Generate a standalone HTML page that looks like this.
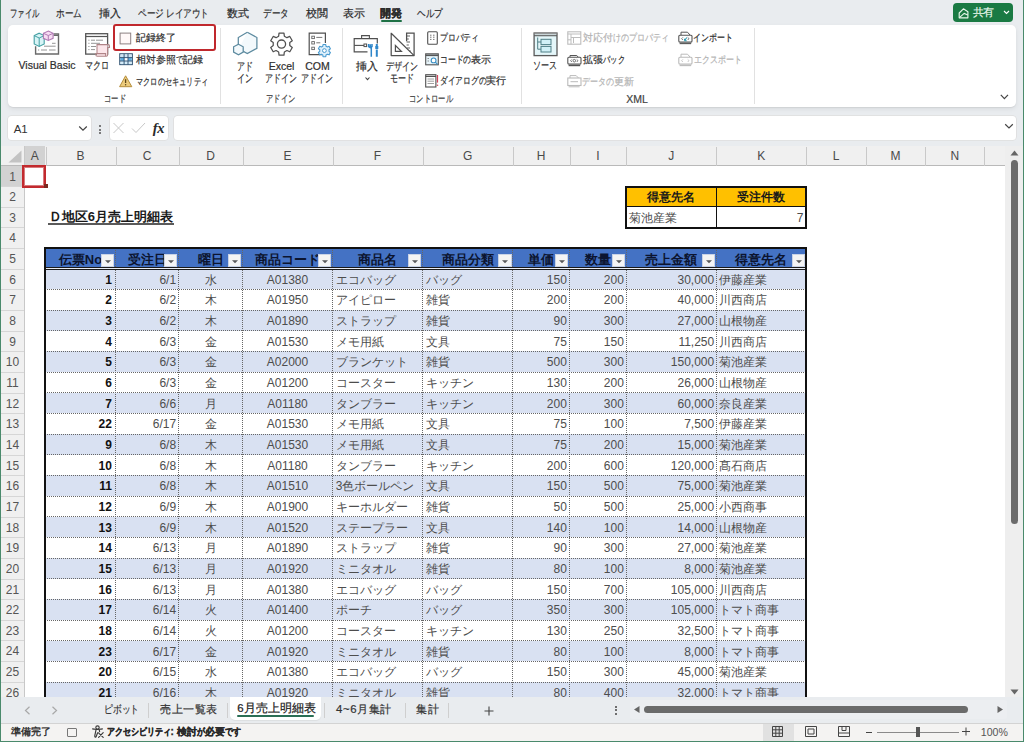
<!DOCTYPE html><html lang="ja"><head><meta charset="utf-8"><style>
html,body{margin:0;padding:0;}body{width:1024px;height:742px;position:relative;overflow:hidden;background:#e9ecef;font-family:"Liberation Sans",sans-serif;}div{box-sizing:border-box;}
</style></head><body>
<div style="position:absolute;left:10px;top:8px;font-size:11px;line-height:11px;color:#2b2b2b;font-weight:normal;white-space:nowrap;-webkit-text-stroke:0.2px #2b2b2b;"><span style="display:inline-block;transform:scaleX(0.670);transform-origin:0 0;margin-right:-1.320em">ファイル</span></div>
<div style="position:absolute;left:56.3px;top:8px;font-size:11px;line-height:11px;color:#2b2b2b;font-weight:normal;white-space:nowrap;-webkit-text-stroke:0.2px #2b2b2b;"><span style="display:inline-block;transform:scaleX(0.780);transform-origin:0 0;margin-right:-0.660em">ホーム</span></div>
<div style="position:absolute;left:99.2px;top:8px;font-size:11px;line-height:11px;color:#2b2b2b;font-weight:normal;white-space:nowrap;-webkit-text-stroke:0.2px #2b2b2b;">挿入</div>
<div style="position:absolute;left:137.5px;top:8px;font-size:11px;line-height:11px;color:#2b2b2b;font-weight:normal;white-space:nowrap;-webkit-text-stroke:0.2px #2b2b2b;"><span style="display:inline-block;transform:scaleX(0.780);transform-origin:0 0;margin-right:-0.660em">ページ</span> <span style="display:inline-block;transform:scaleX(0.780);transform-origin:0 0;margin-right:-1.100em">レイアウト</span></div>
<div style="position:absolute;left:226.9px;top:8px;font-size:11px;line-height:11px;color:#2b2b2b;font-weight:normal;white-space:nowrap;-webkit-text-stroke:0.2px #2b2b2b;">数式</div>
<div style="position:absolute;left:262.8px;top:8px;font-size:11px;line-height:11px;color:#2b2b2b;font-weight:normal;white-space:nowrap;-webkit-text-stroke:0.2px #2b2b2b;"><span style="display:inline-block;transform:scaleX(0.780);transform-origin:0 0;margin-right:-0.660em">データ</span></div>
<div style="position:absolute;left:305.6px;top:8px;font-size:11px;line-height:11px;color:#2b2b2b;font-weight:normal;white-space:nowrap;-webkit-text-stroke:0.2px #2b2b2b;">校閲</div>
<div style="position:absolute;left:342.5px;top:8px;font-size:11px;line-height:11px;color:#2b2b2b;font-weight:normal;white-space:nowrap;-webkit-text-stroke:0.2px #2b2b2b;">表示</div>
<div style="position:absolute;left:380px;top:8px;font-size:11px;line-height:11px;color:#2b2b2b;font-weight:bold;white-space:nowrap;-webkit-text-stroke:0.2px #2b2b2b;">開発</div>
<div style="position:absolute;left:416.6px;top:8px;font-size:11px;line-height:11px;color:#2b2b2b;font-weight:normal;white-space:nowrap;-webkit-text-stroke:0.2px #2b2b2b;"><span style="display:inline-block;transform:scaleX(0.780);transform-origin:0 0;margin-right:-0.660em">ヘルプ</span></div>
<div style="position:absolute;left:380.5px;top:20.3px;width:21.5px;height:1.6px;background:#1e7145;border-radius:1px"></div>
<div style="position:absolute;left:953px;top:3px;width:60px;height:19px;background:#1a7a43;border-radius:4px"></div>
<div style="position:absolute;left:972.6px;top:7.2px;font-size:11px;line-height:11px;color:#e9f8ec;font-weight:normal;white-space:nowrap;letter-spacing:-0.3px;-webkit-text-stroke:0.15px #e9f8ec;">共有</div>
<svg style="position:absolute;left:958px;top:6.5px" width="11" height="12" viewBox="0 0 11 12"><path d="M1.2 6L5.4 1.8L9.9 4.8V10.8H1.2Z" fill="none" stroke="#e6f7ea" stroke-width="1.15" stroke-linejoin="round"/><path d="M1.4 10.6L6.2 6.4L9.8 8" fill="none" stroke="#e6f7ea" stroke-width="1.1"/></svg>
<svg style="position:absolute;left:1003px;top:10px" width="7" height="5" viewBox="0 0 7 5"><path d="M1 1l2.5 2.5L6 1" fill="none" stroke="#fff" stroke-width="1.1"/></svg>
<div style="position:absolute;left:8px;top:25px;width:1008px;height:82.4px;background:#fff;border-radius:5px;box-shadow:0 1px 1px rgba(0,0,0,0.06),0 2px 5px rgba(0,0,0,0.07)"></div>
<div style="position:absolute;left:220.3px;top:28px;width:1px;height:76px;background:#e1e1e1"></div>
<div style="position:absolute;left:341.7px;top:28px;width:1px;height:76px;background:#e1e1e1"></div>
<div style="position:absolute;left:520.5px;top:28px;width:1px;height:76px;background:#e1e1e1"></div>
<div style="position:absolute;left:753.5px;top:28px;width:1px;height:76px;background:#e1e1e1"></div>
<svg style="position:absolute;left:33px;top:30px;overflow:visible" width="27" height="26" viewBox="0 0 27 26">
<path d="M20.5 3.9H25.5V24H2.6V16.3" fill="none" stroke="#6a6a6a" stroke-width="1.4"/>
<path d="M20.5 5.2H25.5" stroke="#6a6a6a" stroke-width="1.6"/>
<path d="M19 13.3h3.6M11 16.2h11.6M5 20h1.2M8 20h6M16 20h6.6" stroke="#8a8a8a" stroke-width="0.9"/>
<path d="M6.2 3.2L11.2 5.6V14L6.2 16.4L1.2 14V5.6Z" fill="#d8f4f6" stroke="#45a0a4" stroke-width="1.1"/>
<path d="M1.2 5.6L6.2 8L11.2 5.6M6.2 8V16.4" fill="none" stroke="#45a0a4" stroke-width="1"/>
<path d="M15.3 1.1L20.1 3.3V8.3L15.3 10.4L10.4 8.3V3.3Z" fill="#f7dcf3" stroke="#b07ab4" stroke-width="1.1"/>
<path d="M10.4 3.3L15.3 5.5L20.1 3.3M15.3 5.5V10.4" fill="none" stroke="#b07ab4" stroke-width="1"/>
</svg>
<div style="position:absolute;left:-13px;top:58.5px;width:120px;text-align:center;font-size:10.5px;line-height:12.5px;color:#2e2e2e;font-weight:normal;white-space:nowrap;-webkit-text-stroke:0.2px #2e2e2e">Visual Basic</div>
<svg style="position:absolute;left:85px;top:33px;overflow:visible" width="25" height="24" viewBox="0 0 25 24">
<rect x="0.7" y="0.7" width="21.9" height="20.4" fill="#fff" stroke="#555" stroke-width="1.3"/>
<path d="M0.7 3.5H22.6" stroke="#555" stroke-width="1.2"/>
<path d="M3.3 7.2h1.2M6 7.2h4M11 7.2h7M3.3 10.3h1.2M6 10.3h9M3.3 13.5h1.2M6 13.5h5M3.3 16.6h1.2M6 16.6h4" stroke="#8a8a8a" stroke-width="0.9"/>
<path d="M12 11.6H22.6V23H12Z" fill="#fce6ea"/>
<path d="M12 20.6V11.6H23.3Q24.5 11.6 24.5 12.9V14.5H22.6V22Q22.6 23.2 21.4 23.2H12.3Q10.9 23.2 10.9 21.9V20.6H20.6V23" fill="none" stroke="#b08487" stroke-width="1.05"/>
</svg>
<div style="position:absolute;left:37px;top:58.5px;width:120px;text-align:center;font-size:10.5px;line-height:12.5px;color:#2e2e2e;font-weight:normal;white-space:nowrap;-webkit-text-stroke:0.2px #2e2e2e"><span style="display:inline-block;transform:scaleX(0.730);transform-origin:0 0;margin-right:-0.810em">マクロ</span></div>
<div style="position:absolute;left:113.3px;top:24px;width:102.3px;height:26.5px;border:2.2px solid #c0282d;border-radius:3px"></div>
<svg style="position:absolute;left:119px;top:31.5px;overflow:visible" width="13" height="13" viewBox="0 0 13 13"><rect x="1.1" y="1.1" width="10.6" height="10.8" fill="#fff8f8" stroke="#8c8082" stroke-width="1"/></svg>
<div style="position:absolute;left:136px;top:32.5px;font-size:10px;line-height:10px;color:#2e2e2e;font-weight:normal;white-space:nowrap;-webkit-text-stroke:0.2px #2e2e2e;">記録終了</div>
<svg style="position:absolute;left:118.5px;top:53px;overflow:visible" width="14" height="12.5" viewBox="0 0 14 12.5">
<rect x="0.8" y="0.8" width="12.5" height="10.8" fill="#fff" stroke="#2a4d6e" stroke-width="1.1"/>
<rect x="1.4" y="1.4" width="11.3" height="3" fill="#cfe7f6"/>
<rect x="1.4" y="4.8" width="3.7" height="3" fill="#5faee3"/><rect x="9.1" y="4.8" width="3.6" height="3" fill="#5faee3"/>
<rect x="1.4" y="8.2" width="11.3" height="3" fill="#d5ecf8"/>
<path d="M5.1 0.8V11.6M9 0.8V11.6M0.8 4.6H13.3M0.8 8H13.3" stroke="#2a4d6e" stroke-width="0.9"/>
</svg>
<div style="position:absolute;left:136px;top:54.5px;font-size:10px;line-height:10px;color:#2e2e2e;font-weight:normal;white-space:nowrap;-webkit-text-stroke:0.2px #2e2e2e;">相対参照<span style="display:inline-block;transform:scaleX(0.730);transform-origin:0 0;margin-right:-0.270em">で</span>記録</div>
<svg style="position:absolute;left:118.5px;top:74.5px;overflow:visible" width="13.5" height="12.5" viewBox="0 0 13.5 12.5">
<path d="M6.6 0.8L12.8 11.7H0.6Z" fill="#eccb7c" stroke="#b48d3c" stroke-width="1" stroke-linejoin="round"/>
<path d="M6.6 4.2V8" stroke="#5c4518" stroke-width="1.3"/><circle cx="6.6" cy="9.7" r="0.75" fill="#5c4518"/>
</svg>
<div style="position:absolute;left:136px;top:76.5px;font-size:10px;line-height:10px;color:#2e2e2e;font-weight:normal;white-space:nowrap;-webkit-text-stroke:0.2px #2e2e2e;"><span style="display:inline-block;transform:scaleX(0.720);transform-origin:0 0;margin-right:-2.800em">マクロのセキュリティ</span></div>
<div style="position:absolute;left:55px;top:92.5px;width:120px;text-align:center;font-size:10px;line-height:12px;color:#444;font-weight:normal;white-space:nowrap;-webkit-text-stroke:0.2px #444"><span style="display:inline-block;transform:scaleX(0.730);transform-origin:0 0;margin-right:-0.810em">コード</span></div>
<svg style="position:absolute;left:232px;top:31px;overflow:visible" width="27" height="25" viewBox="0 0 27 25">
<path d="M15.3 1.2L24.9 6.5V17.3L15.3 22.6L6.8 17.9" fill="#f3f9fc" stroke="#5c8a9f" stroke-width="1.25"/>
<path d="M6.3 13V6.5L15.3 1.2" fill="none" stroke="#5c8a9f" stroke-width="1.25"/>
<path d="M6.5 13.2L11.2 15.8V21.1L6.5 23.7L1.6 21.1V15.8Z" fill="#f3f9fc" stroke="#5c8a9f" stroke-width="1.25"/>
</svg>
<div style="position:absolute;left:184.8px;top:60px;width:120px;text-align:center;font-size:10.5px;line-height:12.5px;color:#2e2e2e;font-weight:normal;white-space:nowrap;-webkit-text-stroke:0.2px #2e2e2e"><span style="display:inline-block;transform:scaleX(0.730);transform-origin:0 0;margin-right:-0.540em">アド</span></div>
<div style="position:absolute;left:184.8px;top:71.5px;width:120px;text-align:center;font-size:10.5px;line-height:12.5px;color:#2e2e2e;font-weight:normal;white-space:nowrap;-webkit-text-stroke:0.2px #2e2e2e"><span style="display:inline-block;transform:scaleX(0.730);transform-origin:0 0;margin-right:-0.540em">イン</span></div>
<svg style="position:absolute;left:269px;top:31.5px;overflow:visible" width="25" height="24" viewBox="0 0 25 24">
<path d="M9.65 4.20 L10.03 1.07 L14.97 1.07 L15.35 4.20 L17.92 5.68 L20.82 4.45 L23.28 8.72 L20.77 10.61 L20.77 13.59 L23.28 15.48 L20.82 19.75 L17.92 18.52 L15.35 20.00 L14.97 23.13 L10.03 23.13 L9.65 20.00 L7.08 18.52 L4.18 19.75 L1.72 15.48 L4.23 13.59 L4.23 10.61 L1.72 8.72 L4.18 4.45 L7.08 5.68Z" fill="#fff" stroke="#505050" stroke-width="1.25" stroke-linejoin="round"/>
<circle cx="12.5" cy="12.1" r="4.1" fill="none" stroke="#505050" stroke-width="1.3"/>
</svg>
<div style="position:absolute;left:221.5px;top:60px;width:120px;text-align:center;font-size:10.5px;line-height:12.5px;color:#2e2e2e;font-weight:normal;white-space:nowrap;-webkit-text-stroke:0.2px #2e2e2e">Excel</div>
<div style="position:absolute;left:221.5px;top:71.5px;width:120px;text-align:center;font-size:10.5px;line-height:12.5px;color:#2e2e2e;font-weight:normal;white-space:nowrap;-webkit-text-stroke:0.2px #2e2e2e"><span style="display:inline-block;transform:scaleX(0.730);transform-origin:0 0;margin-right:-1.080em">アドイン</span></div>
<svg style="position:absolute;left:308px;top:31.5px;overflow:visible" width="24" height="26" viewBox="0 0 24 26">
<path d="M14 22.6H1.2V1.2H17.4V11" fill="#fff" stroke="#505050" stroke-width="1.2"/>
<rect x="3.8" y="4.2" width="2.6" height="2.4" fill="none" stroke="#666" stroke-width="0.9"/><path d="M8.3 5.4h6" stroke="#666" stroke-width="0.9"/>
<rect x="3.8" y="9.6" width="2.6" height="2.4" fill="none" stroke="#666" stroke-width="0.9"/><path d="M8.3 10.8h4" stroke="#666" stroke-width="0.9"/>
<rect x="3.8" y="15.2" width="2.6" height="2.4" fill="none" stroke="#666" stroke-width="0.9"/>
<path d="M14.81 14.18 L15.03 12.45 L17.77 12.45 L17.99 14.18 L19.43 15.01 L21.04 14.34 L22.41 16.72 L21.03 17.77 L21.03 19.43 L22.41 20.48 L21.04 22.86 L19.43 22.19 L17.99 23.02 L17.77 24.75 L15.03 24.75 L14.81 23.02 L13.37 22.19 L11.76 22.86 L10.39 20.48 L11.77 19.43 L11.77 17.77 L10.39 16.72 L11.76 14.34 L13.37 15.01Z" fill="#dff0fb" stroke="#4a9bd0" stroke-width="1.1" stroke-linejoin="round"/>
<circle cx="16.4" cy="18.6" r="1.9" fill="#fff" stroke="#4a9bd0" stroke-width="1"/>
</svg>
<div style="position:absolute;left:257.5px;top:60px;width:120px;text-align:center;font-size:10.5px;line-height:12.5px;color:#2e2e2e;font-weight:normal;white-space:nowrap;-webkit-text-stroke:0.2px #2e2e2e">COM</div>
<div style="position:absolute;left:257.5px;top:71.5px;width:120px;text-align:center;font-size:10.5px;line-height:12.5px;color:#2e2e2e;font-weight:normal;white-space:nowrap;-webkit-text-stroke:0.2px #2e2e2e"><span style="display:inline-block;transform:scaleX(0.730);transform-origin:0 0;margin-right:-1.080em">アドイン</span></div>
<div style="position:absolute;left:221px;top:93px;width:120px;text-align:center;font-size:10px;line-height:12px;color:#444;font-weight:normal;white-space:nowrap;-webkit-text-stroke:0.2px #444"><span style="display:inline-block;transform:scaleX(0.730);transform-origin:0 0;margin-right:-1.080em">アドイン</span></div>
<svg style="position:absolute;left:353px;top:33.5px;overflow:visible" width="27" height="24" viewBox="0 0 27 24">
<path d="M8.6 4.6V1.6H16.4V4.6" fill="none" stroke="#505050" stroke-width="1.1"/>
<path d="M14.5 17.9H1.2V4.6H24.3V9.5" fill="#fff" stroke="#505050" stroke-width="1.2"/>
<path d="M1.2 11.4H11" stroke="#505050" stroke-width="1.1"/><rect x="11" y="10" width="2.6" height="2.6" fill="#fff" stroke="#505050" stroke-width="1"/>
<path d="M17.3 10.2v2.3l1 1.1v9.2M15.6 9.9v2.6l1.7 1.2 1.7-1.2V9.9" fill="none" stroke="#2f86c9" stroke-width="1.5"/>
<path d="M23.8 9.9v4.3M23.8 15.5v7.2" stroke="#2f86c9" stroke-width="2"/><path d="M23.8 12v3" stroke="#2f86c9" stroke-width="3"/>
</svg>
<div style="position:absolute;left:356.3px;top:60.5px;font-size:10.5px;line-height:10.5px;color:#2e2e2e;font-weight:normal;white-space:nowrap;-webkit-text-stroke:0.2px #2e2e2e;">挿入</div>
<svg style="position:absolute;left:365px;top:76.5px;overflow:visible" width="5" height="3.5" viewBox="0 0 5 3.5"><path d="M0.5 0.5L2.5 2.7L4.5 0.5" fill="none" stroke="#444" stroke-width="1.1"/></svg>
<svg style="position:absolute;left:389.5px;top:31.5px;overflow:visible" width="25" height="25" viewBox="0 0 25 25">
<path d="M1.2 1.3V23.6H24.1Z" fill="#fff" stroke="#505050" stroke-width="1.25" stroke-linejoin="round"/>
<path d="M5.4 13.5V19.4H11.4Z" fill="none" stroke="#505050" stroke-width="1.2"/>
<path d="M16.6 9.3V1H24.1V23.6" fill="none" stroke="#505050" stroke-width="1.25"/>
<path d="M16.6 4h3.4M16.6 7h2.2M16.6 10h3.4M16.6 13h2.2M17 16h3M19.3 19h1.5" stroke="#505050" stroke-width="0.9"/>
</svg>
<div style="position:absolute;left:342px;top:60px;width:120px;text-align:center;font-size:10.5px;line-height:12.5px;color:#2e2e2e;font-weight:normal;white-space:nowrap;-webkit-text-stroke:0.2px #2e2e2e"><span style="display:inline-block;transform:scaleX(0.730);transform-origin:0 0;margin-right:-1.080em">デザイン</span></div>
<div style="position:absolute;left:342px;top:71.5px;width:120px;text-align:center;font-size:10.5px;line-height:12.5px;color:#2e2e2e;font-weight:normal;white-space:nowrap;-webkit-text-stroke:0.2px #2e2e2e"><span style="display:inline-block;transform:scaleX(0.730);transform-origin:0 0;margin-right:-0.810em">モード</span></div>
<svg style="position:absolute;left:426.5px;top:31px;overflow:visible" width="11" height="14" viewBox="0 0 11 14">
<rect x="0.7" y="0.7" width="9.6" height="12.6" rx="1" fill="#fff" stroke="#505050" stroke-width="1.1"/>
<path d="M3 4.2h1.5M6 4.2h1.5M3 6.2h1.5M6 6.2h1.5M3 8.4h1.5M6 8.4h1.5" stroke="#777" stroke-width="1"/>
</svg>
<div style="position:absolute;left:439.8px;top:32.5px;font-size:10px;line-height:10px;color:#2e2e2e;font-weight:normal;white-space:nowrap;-webkit-text-stroke:0.2px #2e2e2e;"><span style="display:inline-block;transform:scaleX(0.780);transform-origin:0 0;margin-right:-1.100em">プロパティ</span></div>
<svg style="position:absolute;left:425px;top:52.5px;overflow:visible" width="14" height="13" viewBox="0 0 14 13">
<rect x="0.7" y="0.8" width="12.6" height="11" fill="#e7f4fa" stroke="#555" stroke-width="1.1"/>
<path d="M0.7 2.3H13.3" stroke="#555" stroke-width="1.6"/>
<path d="M2.5 5.5h1.5M2.5 8h1.5" stroke="#777" stroke-width="0.8"/>
<circle cx="8.6" cy="7.4" r="2.4" fill="#fff" stroke="#3b8fc3" stroke-width="1.1"/><path d="M10.3 9.1l2.3 2.3" stroke="#3b8fc3" stroke-width="1.2"/>
</svg>
<div style="position:absolute;left:439.8px;top:54.5px;font-size:10px;line-height:10px;color:#2e2e2e;font-weight:normal;white-space:nowrap;-webkit-text-stroke:0.2px #2e2e2e;"><span style="display:inline-block;transform:scaleX(0.780);transform-origin:0 0;margin-right:-0.880em">コードの</span>表示</div>
<svg style="position:absolute;left:425px;top:73.5px;overflow:visible" width="14" height="14" viewBox="0 0 14 14">
<rect x="0.7" y="0.7" width="10.2" height="12.3" fill="#fff" stroke="#505050" stroke-width="1.1"/>
<path d="M0.7 2.4H10.9" stroke="#505050" stroke-width="1.2"/>
<path d="M2.5 5h6.5M2.5 7.2h6.5M2.5 9.5h6.5" stroke="#888" stroke-width="0.8"/>
<path d="M12.5 1v7.6" stroke="#d6455a" stroke-width="1.2"/><circle cx="12.5" cy="11.3" r="0.8" fill="#d6455a"/>
</svg>
<div style="position:absolute;left:439.8px;top:76px;font-size:10px;line-height:10px;color:#2e2e2e;font-weight:normal;white-space:nowrap;-webkit-text-stroke:0.2px #2e2e2e;"><span style="display:inline-block;transform:scaleX(0.770);transform-origin:0 0;margin-right:-1.380em">ダイアログの</span>実行</div>
<div style="position:absolute;left:371px;top:93px;width:120px;text-align:center;font-size:10px;line-height:12px;color:#444;font-weight:normal;white-space:nowrap;-webkit-text-stroke:0.2px #444"><span style="display:inline-block;transform:scaleX(0.730);transform-origin:0 0;margin-right:-1.620em">コントロール</span></div>
<svg style="position:absolute;left:532.5px;top:31.5px;overflow:visible" width="25" height="25" viewBox="0 0 25 25">
<rect x="1.1" y="1" width="22.9" height="22.6" fill="#e4f6f9" stroke="#5a5a5a" stroke-width="1.3"/>
<path d="M1.1 3.7H24" stroke="#5a5a5a" stroke-width="1.1"/><path d="M1.1 1.9H24" stroke="#9a9a9a" stroke-width="0.9"/>
<rect x="8" y="7.3" width="10" height="5.3" fill="#d1f0f6" stroke="#4f7f86" stroke-width="1"/>
<rect x="8" y="14.4" width="10" height="5.6" fill="#d1f0f6" stroke="#4f7f86" stroke-width="1"/>
<path d="M4.7 5.5V17.2H8M4.7 10H8" fill="none" stroke="#4f7f86" stroke-width="1"/>
</svg>
<div style="position:absolute;left:485.29999999999995px;top:59px;width:120px;text-align:center;font-size:10.5px;line-height:12.5px;color:#2e2e2e;font-weight:normal;white-space:nowrap;-webkit-text-stroke:0.2px #2e2e2e"><span style="display:inline-block;transform:scaleX(0.730);transform-origin:0 0;margin-right:-0.810em">ソース</span></div>
<svg style="position:absolute;left:566.5px;top:31px;overflow:visible" width="15" height="14" viewBox="0 0 15 14">
<rect x="0.8" y="0.8" width="13" height="12.4" fill="#fff" stroke="#bdbdbd" stroke-width="1.1"/>
<path d="M0.8 3h13M4 3v10.2M4 6.5h9.8M6.5 6.5V12M0.8 8.8h3.2" stroke="#bdbdbd" stroke-width="1"/>
</svg>
<div style="position:absolute;left:582.5px;top:32.5px;font-size:10px;line-height:10px;color:#b4b4b4;font-weight:normal;white-space:nowrap;-webkit-text-stroke:0.2px #b4b4b4;">対応付<span style="display:inline-block;transform:scaleX(0.800);transform-origin:0 0;margin-right:-1.400em">けのプロパティ</span></div>
<svg style="position:absolute;left:566.5px;top:52.5px;overflow:visible" width="15" height="14" viewBox="0 0 15 14">
<path d="M3 4.3V2.5H9.8l1.5 1.8" fill="none" stroke="#555" stroke-width="1"/>
<rect x="0.8" y="4.3" width="13.2" height="6.8" rx="1" fill="#fff" stroke="#555" stroke-width="1.1"/>
<path d="M3.6 7.7l1.3-1.3M3.6 7.7l1.3 1.3M11 7.7l-1.3-1.3M11 7.7l-1.3 1.3" stroke="#555" stroke-width="0.8"/><circle cx="7.3" cy="7.7" r="1.3" fill="none" stroke="#555" stroke-width="0.8"/>
<path d="M1.6 12.6H13.2" stroke="#555" stroke-width="1.2"/>
</svg>
<div style="position:absolute;left:582.5px;top:54.5px;font-size:10px;line-height:10px;color:#2e2e2e;font-weight:normal;white-space:nowrap;-webkit-text-stroke:0.2px #2e2e2e;">拡張<span style="display:inline-block;transform:scaleX(0.730);transform-origin:0 0;margin-right:-0.810em">パック</span></div>
<svg style="position:absolute;left:566.5px;top:74px;overflow:visible" width="15" height="14" viewBox="0 0 15 14">
<path d="M3 4V1.6H9.2L11.5 4" fill="none" stroke="#bbb" stroke-width="1"/>
<rect x="0.8" y="4" width="13.2" height="7.5" fill="#fff" stroke="#bbb" stroke-width="1.1"/>
<path d="M3.5 7.7h7.5M1.6 12.8H12.6" stroke="#bbb" stroke-width="1"/>
</svg>
<div style="position:absolute;left:581.5px;top:76.5px;font-size:10px;line-height:10px;color:#b4b4b4;font-weight:normal;white-space:nowrap;-webkit-text-stroke:0.2px #b4b4b4;"><span style="display:inline-block;transform:scaleX(0.800);transform-origin:0 0;margin-right:-0.800em">データの</span>更新</div>
<svg style="position:absolute;left:678px;top:31px;overflow:visible" width="15" height="15" viewBox="0 0 15 15">
<path d="M3 4.3V1.2H9.5L12 4" fill="none" stroke="#555" stroke-width="1"/>
<rect x="0.8" y="4.3" width="13.2" height="6.8" rx="1" fill="#fff" stroke="#555" stroke-width="1.1"/>
<path d="M3.6 7.7l1.3-1.3M3.6 7.7l1.3 1.3M11 7.7l-1.3-1.3M11 7.7l-1.3 1.3" stroke="#555" stroke-width="0.8"/>
<path d="M8.8 6.5L6.5 9.8M6.5 9.8h2.2M6.5 9.8V7.8" stroke="#2f9bb0" stroke-width="1.1" fill="none"/>
<path d="M1.6 12.6H13.2" stroke="#555" stroke-width="1.1"/>
</svg>
<div style="position:absolute;left:692.7px;top:32.5px;font-size:10px;line-height:10px;color:#2e2e2e;font-weight:normal;white-space:nowrap;-webkit-text-stroke:0.2px #2e2e2e;"><span style="display:inline-block;transform:scaleX(0.800);transform-origin:0 0;margin-right:-1.000em">インポート</span></div>
<svg style="position:absolute;left:678px;top:52.5px;overflow:visible" width="15" height="14" viewBox="0 0 15 14">
<path d="M3 4.3V1.2H9.5L12 4" fill="none" stroke="#bbb" stroke-width="1"/>
<rect x="0.8" y="4.3" width="13.2" height="6.8" rx="1" fill="#fff" stroke="#bbb" stroke-width="1.1"/>
<path d="M3.6 7.7l1.3-1.3M3.6 7.7l1.3 1.3M11 7.7l-1.3-1.3M11 7.7l-1.3 1.3" stroke="#bbb" stroke-width="0.8"/>
<path d="M1.6 12.6H13.2" stroke="#bbb" stroke-width="1.1"/>
</svg>
<div style="position:absolute;left:693.7px;top:54.5px;font-size:10px;line-height:10px;color:#b4b4b4;font-weight:normal;white-space:nowrap;-webkit-text-stroke:0.2px #b4b4b4;"><span style="display:inline-block;transform:scaleX(0.800);transform-origin:0 0;margin-right:-1.200em">エクスポート</span></div>
<div style="position:absolute;left:577px;top:93px;width:120px;text-align:center;font-size:10.5px;line-height:12.5px;color:#444;font-weight:normal;white-space:nowrap;-webkit-text-stroke:0.2px #444">XML</div>
<svg style="position:absolute;left:1000.3px;top:94px;overflow:visible" width="9" height="6" viewBox="0 0 9 6"><path d="M0.8 0.8L4.4 4.6L8 0.8" fill="none" stroke="#444" stroke-width="1.2"/></svg>
<div style="position:absolute;left:8px;top:116px;width:83px;height:23.5px;background:#fff;border-radius:3.5px;box-shadow:0 0 0 0.8px #dedede"></div>
<div style="position:absolute;left:13.7px;top:123.5px;font-size:11.5px;line-height:11.5px;color:#333;font-weight:normal;white-space:nowrap;">A1</div>
<svg style="position:absolute;left:78px;top:125px" width="10" height="7" viewBox="0 0 10 7"><path d="M1.2 1.5l3.8 3.6 3.8-3.6" fill="none" stroke="#444" stroke-width="1.2"/></svg>
<div style="position:absolute;left:98.8px;top:125px;width:2px;height:2px;background:#555;border-radius:1px"></div>
<div style="position:absolute;left:98.8px;top:128.5px;width:2px;height:2px;background:#555;border-radius:1px"></div>
<div style="position:absolute;left:98.8px;top:132px;width:2px;height:2px;background:#555;border-radius:1px"></div>
<div style="position:absolute;left:109.5px;top:116px;width:58.5px;height:23.5px;background:#fff;border-radius:3.5px;box-shadow:0 0 0 0.8px #dedede"></div>
<svg style="position:absolute;left:112px;top:122px" width="13" height="12" viewBox="0 0 13 12"><path d="M1.5 1l10 10M11.5 1l-10 10" fill="none" stroke="#c8c8c8" stroke-width="1"/></svg>
<svg style="position:absolute;left:131px;top:122px" width="15" height="12" viewBox="0 0 15 12"><path d="M1 6.5l4 4 9-9.5" fill="none" stroke="#c8c8c8" stroke-width="1"/></svg>
<div style="position:absolute;left:152.8px;top:120.5px;font-size:14.5px;line-height:14.5px;color:#2a2a2a;font-weight:bold;white-space:nowrap;font-family:'Liberation Serif',serif;letter-spacing:-0.5px;"><i>fx</i></div>
<div style="position:absolute;left:174px;top:116px;width:842px;height:23.5px;background:#fff;border-radius:3.5px;box-shadow:0 0 0 0.8px #dedede"></div>
<svg style="position:absolute;left:1004px;top:123px" width="10" height="7" viewBox="0 0 10 7"><path d="M1.2 1.3l3.8 3.6 3.8-3.6" fill="none" stroke="#444" stroke-width="1.2"/></svg>
<div style="position:absolute;left:1px;top:146px;width:1004.3px;height:551px;background:#fff"></div>
<div style="position:absolute;left:1px;top:146px;width:1004.3px;height:20px;background:#f0f0f0;border-bottom:1px solid #b9b9b9"></div>
<div style="position:absolute;left:1px;top:166px;width:23.2px;height:531px;background:#f0f0f0"></div>
<div style="position:absolute;left:24px;top:146px;width:1px;height:551px;background:#c8c8c8"></div>
<svg style="position:absolute;left:8px;top:150px" width="14" height="13" viewBox="0 0 14 13"><path d="M13.5 0.5V12.5H0.5Z" fill="#c3c3c3"/></svg>
<div style="position:absolute;left:24.7px;top:146px;width:20.8px;height:19.5px;background:#d2d2d2"></div>
<div style="position:absolute;left:1px;top:166px;width:23px;height:20.65px;background:#d2d2d2"></div>
<div style="position:absolute;left:24.2px;top:149px;width:21.3px;text-align:center;font-size:12px;line-height:14px;color:#4a4a4a">A</div>
<div style="position:absolute;left:45.5px;top:147px;width:1px;height:19px;background:#c9c9c9"></div>
<div style="position:absolute;left:45.5px;top:149px;width:70.0px;text-align:center;font-size:12px;line-height:14px;color:#4a4a4a">B</div>
<div style="position:absolute;left:115.5px;top:147px;width:1px;height:19px;background:#c9c9c9"></div>
<div style="position:absolute;left:115.5px;top:149px;width:63.0px;text-align:center;font-size:12px;line-height:14px;color:#4a4a4a">C</div>
<div style="position:absolute;left:178.5px;top:147px;width:1px;height:19px;background:#c9c9c9"></div>
<div style="position:absolute;left:178.5px;top:149px;width:64.0px;text-align:center;font-size:12px;line-height:14px;color:#4a4a4a">D</div>
<div style="position:absolute;left:242.5px;top:147px;width:1px;height:19px;background:#c9c9c9"></div>
<div style="position:absolute;left:242.5px;top:149px;width:90.0px;text-align:center;font-size:12px;line-height:14px;color:#4a4a4a">E</div>
<div style="position:absolute;left:332.5px;top:147px;width:1px;height:19px;background:#c9c9c9"></div>
<div style="position:absolute;left:332.5px;top:149px;width:90.0px;text-align:center;font-size:12px;line-height:14px;color:#4a4a4a">F</div>
<div style="position:absolute;left:422.5px;top:147px;width:1px;height:19px;background:#c9c9c9"></div>
<div style="position:absolute;left:422.5px;top:149px;width:90.20000000000005px;text-align:center;font-size:12px;line-height:14px;color:#4a4a4a">G</div>
<div style="position:absolute;left:512.7px;top:147px;width:1px;height:19px;background:#c9c9c9"></div>
<div style="position:absolute;left:512.7px;top:149px;width:56.799999999999955px;text-align:center;font-size:12px;line-height:14px;color:#4a4a4a">H</div>
<div style="position:absolute;left:569.5px;top:147px;width:1px;height:19px;background:#c9c9c9"></div>
<div style="position:absolute;left:569.5px;top:149px;width:56.89999999999998px;text-align:center;font-size:12px;line-height:14px;color:#4a4a4a">I</div>
<div style="position:absolute;left:626.4px;top:147px;width:1px;height:19px;background:#c9c9c9"></div>
<div style="position:absolute;left:626.4px;top:149px;width:89.89999999999998px;text-align:center;font-size:12px;line-height:14px;color:#4a4a4a">J</div>
<div style="position:absolute;left:716.3px;top:147px;width:1px;height:19px;background:#c9c9c9"></div>
<div style="position:absolute;left:716.3px;top:149px;width:90.10000000000002px;text-align:center;font-size:12px;line-height:14px;color:#4a4a4a">K</div>
<div style="position:absolute;left:806.4px;top:147px;width:1px;height:19px;background:#c9c9c9"></div>
<div style="position:absolute;left:806.4px;top:149px;width:59.30000000000007px;text-align:center;font-size:12px;line-height:14px;color:#4a4a4a">L</div>
<div style="position:absolute;left:865.7px;top:147px;width:1px;height:19px;background:#c9c9c9"></div>
<div style="position:absolute;left:865.7px;top:149px;width:59.5px;text-align:center;font-size:12px;line-height:14px;color:#4a4a4a">M</div>
<div style="position:absolute;left:925.2px;top:147px;width:1px;height:19px;background:#c9c9c9"></div>
<div style="position:absolute;left:925.2px;top:149px;width:59.19999999999993px;text-align:center;font-size:12px;line-height:14px;color:#4a4a4a">N</div>
<div style="position:absolute;left:984.4px;top:147px;width:1px;height:19px;background:#c9c9c9"></div>
<div style="position:absolute;left:1px;top:186.15px;width:23.2px;height:1px;background:#d6d6d6"></div>
<div style="position:absolute;left:1px;top:169.5px;width:23px;text-align:center;font-size:12px;line-height:14px;color:#555">1</div>
<div style="position:absolute;left:1px;top:206.8px;width:23.2px;height:1px;background:#d6d6d6"></div>
<div style="position:absolute;left:1px;top:190.15px;width:23px;text-align:center;font-size:12px;line-height:14px;color:#555">2</div>
<div style="position:absolute;left:1px;top:227.45000000000002px;width:23.2px;height:1px;background:#d6d6d6"></div>
<div style="position:absolute;left:1px;top:210.8px;width:23px;text-align:center;font-size:12px;line-height:14px;color:#555">3</div>
<div style="position:absolute;left:1px;top:248.1px;width:23.2px;height:1px;background:#d6d6d6"></div>
<div style="position:absolute;left:1px;top:231.45px;width:23px;text-align:center;font-size:12px;line-height:14px;color:#555">4</div>
<div style="position:absolute;left:1px;top:268.75px;width:23.2px;height:1px;background:#d6d6d6"></div>
<div style="position:absolute;left:1px;top:252.1px;width:23px;text-align:center;font-size:12px;line-height:14px;color:#555">5</div>
<div style="position:absolute;left:1px;top:289.4px;width:23.2px;height:1px;background:#d6d6d6"></div>
<div style="position:absolute;left:1px;top:272.75px;width:23px;text-align:center;font-size:12px;line-height:14px;color:#555">6</div>
<div style="position:absolute;left:1px;top:310.04999999999995px;width:23.2px;height:1px;background:#d6d6d6"></div>
<div style="position:absolute;left:1px;top:293.4px;width:23px;text-align:center;font-size:12px;line-height:14px;color:#555">7</div>
<div style="position:absolute;left:1px;top:330.69999999999993px;width:23.2px;height:1px;background:#d6d6d6"></div>
<div style="position:absolute;left:1px;top:314.04999999999995px;width:23px;text-align:center;font-size:12px;line-height:14px;color:#555">8</div>
<div style="position:absolute;left:1px;top:351.34999999999997px;width:23.2px;height:1px;background:#d6d6d6"></div>
<div style="position:absolute;left:1px;top:334.7px;width:23px;text-align:center;font-size:12px;line-height:14px;color:#555">9</div>
<div style="position:absolute;left:1px;top:372.0px;width:23.2px;height:1px;background:#d6d6d6"></div>
<div style="position:absolute;left:1px;top:355.35px;width:23px;text-align:center;font-size:12px;line-height:14px;color:#555">10</div>
<div style="position:absolute;left:1px;top:392.65px;width:23.2px;height:1px;background:#d6d6d6"></div>
<div style="position:absolute;left:1px;top:376.0px;width:23px;text-align:center;font-size:12px;line-height:14px;color:#555">11</div>
<div style="position:absolute;left:1px;top:413.29999999999995px;width:23.2px;height:1px;background:#d6d6d6"></div>
<div style="position:absolute;left:1px;top:396.65px;width:23px;text-align:center;font-size:12px;line-height:14px;color:#555">12</div>
<div style="position:absolute;left:1px;top:433.94999999999993px;width:23.2px;height:1px;background:#d6d6d6"></div>
<div style="position:absolute;left:1px;top:417.29999999999995px;width:23px;text-align:center;font-size:12px;line-height:14px;color:#555">13</div>
<div style="position:absolute;left:1px;top:454.59999999999997px;width:23.2px;height:1px;background:#d6d6d6"></div>
<div style="position:absolute;left:1px;top:437.95px;width:23px;text-align:center;font-size:12px;line-height:14px;color:#555">14</div>
<div style="position:absolute;left:1px;top:475.24999999999994px;width:23.2px;height:1px;background:#d6d6d6"></div>
<div style="position:absolute;left:1px;top:458.59999999999997px;width:23px;text-align:center;font-size:12px;line-height:14px;color:#555">15</div>
<div style="position:absolute;left:1px;top:495.9px;width:23.2px;height:1px;background:#d6d6d6"></div>
<div style="position:absolute;left:1px;top:479.25px;width:23px;text-align:center;font-size:12px;line-height:14px;color:#555">16</div>
<div style="position:absolute;left:1px;top:516.55px;width:23.2px;height:1px;background:#d6d6d6"></div>
<div style="position:absolute;left:1px;top:499.9px;width:23px;text-align:center;font-size:12px;line-height:14px;color:#555">17</div>
<div style="position:absolute;left:1px;top:537.1999999999999px;width:23.2px;height:1px;background:#d6d6d6"></div>
<div style="position:absolute;left:1px;top:520.55px;width:23px;text-align:center;font-size:12px;line-height:14px;color:#555">18</div>
<div style="position:absolute;left:1px;top:557.85px;width:23.2px;height:1px;background:#d6d6d6"></div>
<div style="position:absolute;left:1px;top:541.2px;width:23px;text-align:center;font-size:12px;line-height:14px;color:#555">19</div>
<div style="position:absolute;left:1px;top:578.4999999999999px;width:23.2px;height:1px;background:#d6d6d6"></div>
<div style="position:absolute;left:1px;top:561.8499999999999px;width:23px;text-align:center;font-size:12px;line-height:14px;color:#555">20</div>
<div style="position:absolute;left:1px;top:599.15px;width:23.2px;height:1px;background:#d6d6d6"></div>
<div style="position:absolute;left:1px;top:582.5px;width:23px;text-align:center;font-size:12px;line-height:14px;color:#555">21</div>
<div style="position:absolute;left:1px;top:619.8px;width:23.2px;height:1px;background:#d6d6d6"></div>
<div style="position:absolute;left:1px;top:603.15px;width:23px;text-align:center;font-size:12px;line-height:14px;color:#555">22</div>
<div style="position:absolute;left:1px;top:640.4499999999999px;width:23.2px;height:1px;background:#d6d6d6"></div>
<div style="position:absolute;left:1px;top:623.8px;width:23px;text-align:center;font-size:12px;line-height:14px;color:#555">23</div>
<div style="position:absolute;left:1px;top:661.1px;width:23.2px;height:1px;background:#d6d6d6"></div>
<div style="position:absolute;left:1px;top:644.45px;width:23px;text-align:center;font-size:12px;line-height:14px;color:#555">24</div>
<div style="position:absolute;left:1px;top:681.7499999999999px;width:23.2px;height:1px;background:#d6d6d6"></div>
<div style="position:absolute;left:1px;top:665.0999999999999px;width:23px;text-align:center;font-size:12px;line-height:14px;color:#555">25</div>
<div style="position:absolute;left:1px;top:702.4px;width:23.2px;height:1px;background:#d6d6d6"></div>
<div style="position:absolute;left:1px;top:685.75px;width:23px;text-align:center;font-size:12px;line-height:14px;color:#555">26</div>
<div style="position:absolute;left:25px;top:166.5px;width:980.3px;height:530.5px;overflow:hidden">
<div style="position:absolute;left:20.2px;top:81.7px;width:761.0px;height:20.44px;background:#4472c4"></div>
<div style="position:absolute;left:20.2px;top:102.13px;width:761.0px;height:20.67px;background:#d9e1f2"></div>
<div style="position:absolute;left:20.2px;top:143.47px;width:761.0px;height:20.67px;background:#d9e1f2"></div>
<div style="position:absolute;left:20.2px;top:184.8px;width:761.0px;height:20.67px;background:#d9e1f2"></div>
<div style="position:absolute;left:20.2px;top:226.14px;width:761.0px;height:20.67px;background:#d9e1f2"></div>
<div style="position:absolute;left:20.2px;top:267.47px;width:761.0px;height:20.67px;background:#d9e1f2"></div>
<div style="position:absolute;left:20.2px;top:308.81px;width:761.0px;height:20.67px;background:#d9e1f2"></div>
<div style="position:absolute;left:20.2px;top:350.14px;width:761.0px;height:20.67px;background:#d9e1f2"></div>
<div style="position:absolute;left:20.2px;top:391.47px;width:761.0px;height:20.67px;background:#d9e1f2"></div>
<div style="position:absolute;left:20.2px;top:432.81px;width:761.0px;height:20.67px;background:#d9e1f2"></div>
<div style="position:absolute;left:20.2px;top:474.14px;width:761.0px;height:20.67px;background:#d9e1f2"></div>
<div style="position:absolute;left:20.2px;top:515.48px;width:761.0px;height:20.67px;background:#d9e1f2"></div>
<div style="position:absolute;left:20.2px;top:122.5px;width:761.0px;height:1px;background:repeating-linear-gradient(90deg,#666 0 1px,transparent 1px 2px)"></div>
<div style="position:absolute;left:20.2px;top:143.5px;width:761.0px;height:1px;background:repeating-linear-gradient(90deg,#666 0 1px,transparent 1px 2px)"></div>
<div style="position:absolute;left:20.2px;top:163.5px;width:761.0px;height:1px;background:repeating-linear-gradient(90deg,#666 0 1px,transparent 1px 2px)"></div>
<div style="position:absolute;left:20.2px;top:184.5px;width:761.0px;height:1px;background:repeating-linear-gradient(90deg,#666 0 1px,transparent 1px 2px)"></div>
<div style="position:absolute;left:20.2px;top:205.5px;width:761.0px;height:1px;background:repeating-linear-gradient(90deg,#666 0 1px,transparent 1px 2px)"></div>
<div style="position:absolute;left:20.2px;top:225.5px;width:761.0px;height:1px;background:repeating-linear-gradient(90deg,#666 0 1px,transparent 1px 2px)"></div>
<div style="position:absolute;left:20.2px;top:246.5px;width:761.0px;height:1px;background:repeating-linear-gradient(90deg,#666 0 1px,transparent 1px 2px)"></div>
<div style="position:absolute;left:20.2px;top:267.5px;width:761.0px;height:1px;background:repeating-linear-gradient(90deg,#666 0 1px,transparent 1px 2px)"></div>
<div style="position:absolute;left:20.2px;top:287.5px;width:761.0px;height:1px;background:repeating-linear-gradient(90deg,#666 0 1px,transparent 1px 2px)"></div>
<div style="position:absolute;left:20.2px;top:308.5px;width:761.0px;height:1px;background:repeating-linear-gradient(90deg,#666 0 1px,transparent 1px 2px)"></div>
<div style="position:absolute;left:20.2px;top:329.5px;width:761.0px;height:1px;background:repeating-linear-gradient(90deg,#666 0 1px,transparent 1px 2px)"></div>
<div style="position:absolute;left:20.2px;top:349.5px;width:761.0px;height:1px;background:repeating-linear-gradient(90deg,#666 0 1px,transparent 1px 2px)"></div>
<div style="position:absolute;left:20.2px;top:370.5px;width:761.0px;height:1px;background:repeating-linear-gradient(90deg,#666 0 1px,transparent 1px 2px)"></div>
<div style="position:absolute;left:20.2px;top:391.5px;width:761.0px;height:1px;background:repeating-linear-gradient(90deg,#666 0 1px,transparent 1px 2px)"></div>
<div style="position:absolute;left:20.2px;top:411.5px;width:761.0px;height:1px;background:repeating-linear-gradient(90deg,#666 0 1px,transparent 1px 2px)"></div>
<div style="position:absolute;left:20.2px;top:432.5px;width:761.0px;height:1px;background:repeating-linear-gradient(90deg,#666 0 1px,transparent 1px 2px)"></div>
<div style="position:absolute;left:20.2px;top:453.5px;width:761.0px;height:1px;background:repeating-linear-gradient(90deg,#666 0 1px,transparent 1px 2px)"></div>
<div style="position:absolute;left:20.2px;top:473.5px;width:761.0px;height:1px;background:repeating-linear-gradient(90deg,#666 0 1px,transparent 1px 2px)"></div>
<div style="position:absolute;left:20.2px;top:494.5px;width:761.0px;height:1px;background:repeating-linear-gradient(90deg,#666 0 1px,transparent 1px 2px)"></div>
<div style="position:absolute;left:20.2px;top:515.5px;width:761.0px;height:1px;background:repeating-linear-gradient(90deg,#666 0 1px,transparent 1px 2px)"></div>
<div style="position:absolute;left:20.2px;top:535.5px;width:761.0px;height:1px;background:repeating-linear-gradient(90deg,#666 0 1px,transparent 1px 2px)"></div>
<div style="position:absolute;left:90px;top:81.7px;width:1px;height:448.8px;background:repeating-linear-gradient(180deg,#666 0 1px,transparent 1px 2px)"></div>
<div style="position:absolute;left:153px;top:81.7px;width:1px;height:448.8px;background:repeating-linear-gradient(180deg,#666 0 1px,transparent 1px 2px)"></div>
<div style="position:absolute;left:217px;top:81.7px;width:1px;height:448.8px;background:repeating-linear-gradient(180deg,#666 0 1px,transparent 1px 2px)"></div>
<div style="position:absolute;left:307px;top:81.7px;width:1px;height:448.8px;background:repeating-linear-gradient(180deg,#666 0 1px,transparent 1px 2px)"></div>
<div style="position:absolute;left:397px;top:81.7px;width:1px;height:448.8px;background:repeating-linear-gradient(180deg,#666 0 1px,transparent 1px 2px)"></div>
<div style="position:absolute;left:487px;top:81.7px;width:1px;height:448.8px;background:repeating-linear-gradient(180deg,#666 0 1px,transparent 1px 2px)"></div>
<div style="position:absolute;left:544px;top:81.7px;width:1px;height:448.8px;background:repeating-linear-gradient(180deg,#666 0 1px,transparent 1px 2px)"></div>
<div style="position:absolute;left:601px;top:81.7px;width:1px;height:448.8px;background:repeating-linear-gradient(180deg,#666 0 1px,transparent 1px 2px)"></div>
<div style="position:absolute;left:691px;top:81.7px;width:1px;height:448.8px;background:repeating-linear-gradient(180deg,#666 0 1px,transparent 1px 2px)"></div>
<div style="position:absolute;left:20.2px;top:100.94px;width:761.0px;height:1px;background:#1a1a1a"></div>
<div style="position:absolute;left:20.2px;top:101.94px;width:761.0px;height:1px;background:#e8ecf4"></div>
<div style="position:absolute;left:20.2px;top:102.94px;width:761.0px;height:1px;background:#1a1a1a"></div>
<div style="position:absolute;left:19.2px;top:80.9px;width:763.2px;height:1.7px;background:#111"></div>
<div style="position:absolute;left:19.2px;top:80.9px;width:1.6px;height:449.6px;background:#111"></div>
<div style="position:absolute;left:780.4px;top:80.9px;width:1.8px;height:449.6px;background:#111"></div>
<div style="position:absolute;left:20.50px;top:85.10px;width:70.00px;text-align:center;font-size:13px;line-height:16px;color:#0c1530;font-weight:bold;white-space:nowrap">伝票No</div>
<div style="position:absolute;left:76.2px;top:87.9px;width:13.2px;height:12.9px;background:#f4f4f4;border:0.5px solid #c9d3e6"></div>
<svg style="position:absolute;left:80.00px;top:93.20px" width="6" height="4" viewBox="0 0 6 4"><path d="M0 0.3H6L3 3.3Z" fill="#595959"/></svg>
<div style="position:absolute;left:90.50px;top:85.10px;width:63.00px;text-align:center;font-size:13px;line-height:16px;color:#0c1530;font-weight:bold;white-space:nowrap">受注日</div>
<div style="position:absolute;left:139.2px;top:87.9px;width:13.2px;height:12.9px;background:#f4f4f4;border:0.5px solid #c9d3e6"></div>
<svg style="position:absolute;left:143.00px;top:93.20px" width="6" height="4" viewBox="0 0 6 4"><path d="M0 0.3H6L3 3.3Z" fill="#595959"/></svg>
<div style="position:absolute;left:153.50px;top:85.10px;width:64.00px;text-align:center;font-size:13px;line-height:16px;color:#0c1530;font-weight:bold;white-space:nowrap">曜日</div>
<div style="position:absolute;left:203.2px;top:87.9px;width:13.2px;height:12.9px;background:#f4f4f4;border:0.5px solid #c9d3e6"></div>
<svg style="position:absolute;left:207.00px;top:93.20px" width="6" height="4" viewBox="0 0 6 4"><path d="M0 0.3H6L3 3.3Z" fill="#595959"/></svg>
<div style="position:absolute;left:217.50px;top:85.10px;width:90.00px;text-align:center;font-size:13px;line-height:16px;color:#0c1530;font-weight:bold;white-space:nowrap">商品コード</div>
<div style="position:absolute;left:293.2px;top:87.9px;width:13.2px;height:12.9px;background:#f4f4f4;border:0.5px solid #c9d3e6"></div>
<svg style="position:absolute;left:297.00px;top:93.20px" width="6" height="4" viewBox="0 0 6 4"><path d="M0 0.3H6L3 3.3Z" fill="#595959"/></svg>
<div style="position:absolute;left:307.50px;top:85.10px;width:90.00px;text-align:center;font-size:13px;line-height:16px;color:#0c1530;font-weight:bold;white-space:nowrap">商品名</div>
<div style="position:absolute;left:383.2px;top:87.9px;width:13.2px;height:12.9px;background:#f4f4f4;border:0.5px solid #c9d3e6"></div>
<svg style="position:absolute;left:387.00px;top:93.20px" width="6" height="4" viewBox="0 0 6 4"><path d="M0 0.3H6L3 3.3Z" fill="#595959"/></svg>
<div style="position:absolute;left:397.50px;top:85.10px;width:90.20px;text-align:center;font-size:13px;line-height:16px;color:#0c1530;font-weight:bold;white-space:nowrap">商品分類</div>
<div style="position:absolute;left:473.4px;top:87.9px;width:13.2px;height:12.9px;background:#f4f4f4;border:0.5px solid #c9d3e6"></div>
<svg style="position:absolute;left:477.20px;top:93.20px" width="6" height="4" viewBox="0 0 6 4"><path d="M0 0.3H6L3 3.3Z" fill="#595959"/></svg>
<div style="position:absolute;left:487.70px;top:85.10px;width:56.80px;text-align:center;font-size:13px;line-height:16px;color:#0c1530;font-weight:bold;white-space:nowrap">単価</div>
<div style="position:absolute;left:530.2px;top:87.9px;width:13.2px;height:12.9px;background:#f4f4f4;border:0.5px solid #c9d3e6"></div>
<svg style="position:absolute;left:534.00px;top:93.20px" width="6" height="4" viewBox="0 0 6 4"><path d="M0 0.3H6L3 3.3Z" fill="#595959"/></svg>
<div style="position:absolute;left:544.50px;top:85.10px;width:56.90px;text-align:center;font-size:13px;line-height:16px;color:#0c1530;font-weight:bold;white-space:nowrap">数量</div>
<div style="position:absolute;left:587.1px;top:87.9px;width:13.2px;height:12.9px;background:#f4f4f4;border:0.5px solid #c9d3e6"></div>
<svg style="position:absolute;left:590.90px;top:93.20px" width="6" height="4" viewBox="0 0 6 4"><path d="M0 0.3H6L3 3.3Z" fill="#595959"/></svg>
<div style="position:absolute;left:601.40px;top:85.10px;width:89.90px;text-align:center;font-size:13px;line-height:16px;color:#0c1530;font-weight:bold;white-space:nowrap">売上金額</div>
<div style="position:absolute;left:677.0px;top:87.9px;width:13.2px;height:12.9px;background:#f4f4f4;border:0.5px solid #c9d3e6"></div>
<svg style="position:absolute;left:680.80px;top:93.20px" width="6" height="4" viewBox="0 0 6 4"><path d="M0 0.3H6L3 3.3Z" fill="#595959"/></svg>
<div style="position:absolute;left:691.30px;top:85.10px;width:90.10px;text-align:center;font-size:13px;line-height:16px;color:#0c1530;font-weight:bold;white-space:nowrap">得意先名</div>
<div style="position:absolute;left:767.1px;top:87.9px;width:13.2px;height:12.9px;background:#f4f4f4;border:0.5px solid #c9d3e6"></div>
<svg style="position:absolute;left:770.90px;top:93.20px" width="6" height="4" viewBox="0 0 6 4"><path d="M0 0.3H6L3 3.3Z" fill="#595959"/></svg>
<div style="position:absolute;left:24.10px;top:105.13px;width:62.80px;text-align:right;font-size:12px;line-height:16px;color:#111;white-space:nowrap;font-weight:bold;">1</div>
<div style="position:absolute;left:92.90px;top:105.13px;width:58.20px;text-align:right;font-size:12px;line-height:16px;color:#4d4d4d;white-space:nowrap;">6/1</div>
<div style="position:absolute;left:156.50px;top:105.13px;width:58.00px;text-align:center;font-size:12px;line-height:16px;color:#4d4d4d;white-space:nowrap;">水</div>
<div style="position:absolute;left:220.50px;top:105.13px;width:84.00px;text-align:center;font-size:12px;line-height:16px;color:#4d4d4d;white-space:nowrap;">A01380</div>
<div style="position:absolute;left:310.70px;top:105.13px;width:83.60px;text-align:left;font-size:12px;line-height:16px;color:#4d4d4d;white-space:nowrap;">エコバッグ</div>
<div style="position:absolute;left:400.50px;top:105.13px;width:84.20px;text-align:left;font-size:12px;line-height:16px;color:#4d4d4d;white-space:nowrap;">バッグ</div>
<div style="position:absolute;left:490.30px;top:105.13px;width:51.60px;text-align:right;font-size:12px;line-height:16px;color:#4d4d4d;white-space:nowrap;">150</div>
<div style="position:absolute;left:547.00px;top:105.13px;width:51.90px;text-align:right;font-size:12px;line-height:16px;color:#4d4d4d;white-space:nowrap;">200</div>
<div style="position:absolute;left:603.50px;top:105.13px;width:85.70px;text-align:right;font-size:12px;line-height:16px;color:#4d4d4d;white-space:nowrap;">30,000</div>
<div style="position:absolute;left:693.80px;top:105.13px;width:85.10px;text-align:left;font-size:12px;line-height:16px;color:#4d4d4d;white-space:nowrap;">伊藤産業</div>
<div style="position:absolute;left:24.10px;top:125.80px;width:62.80px;text-align:right;font-size:12px;line-height:16px;color:#111;white-space:nowrap;font-weight:bold;">2</div>
<div style="position:absolute;left:92.90px;top:125.80px;width:58.20px;text-align:right;font-size:12px;line-height:16px;color:#4d4d4d;white-space:nowrap;">6/2</div>
<div style="position:absolute;left:156.50px;top:125.80px;width:58.00px;text-align:center;font-size:12px;line-height:16px;color:#4d4d4d;white-space:nowrap;">木</div>
<div style="position:absolute;left:220.50px;top:125.80px;width:84.00px;text-align:center;font-size:12px;line-height:16px;color:#4d4d4d;white-space:nowrap;">A01950</div>
<div style="position:absolute;left:310.70px;top:125.80px;width:83.60px;text-align:left;font-size:12px;line-height:16px;color:#4d4d4d;white-space:nowrap;">アイピロー</div>
<div style="position:absolute;left:400.50px;top:125.80px;width:84.20px;text-align:left;font-size:12px;line-height:16px;color:#4d4d4d;white-space:nowrap;">雑貨</div>
<div style="position:absolute;left:490.30px;top:125.80px;width:51.60px;text-align:right;font-size:12px;line-height:16px;color:#4d4d4d;white-space:nowrap;">200</div>
<div style="position:absolute;left:547.00px;top:125.80px;width:51.90px;text-align:right;font-size:12px;line-height:16px;color:#4d4d4d;white-space:nowrap;">200</div>
<div style="position:absolute;left:603.50px;top:125.80px;width:85.70px;text-align:right;font-size:12px;line-height:16px;color:#4d4d4d;white-space:nowrap;">40,000</div>
<div style="position:absolute;left:693.80px;top:125.80px;width:85.10px;text-align:left;font-size:12px;line-height:16px;color:#4d4d4d;white-space:nowrap;">川西商店</div>
<div style="position:absolute;left:24.10px;top:146.47px;width:62.80px;text-align:right;font-size:12px;line-height:16px;color:#111;white-space:nowrap;font-weight:bold;">3</div>
<div style="position:absolute;left:92.90px;top:146.47px;width:58.20px;text-align:right;font-size:12px;line-height:16px;color:#4d4d4d;white-space:nowrap;">6/2</div>
<div style="position:absolute;left:156.50px;top:146.47px;width:58.00px;text-align:center;font-size:12px;line-height:16px;color:#4d4d4d;white-space:nowrap;">木</div>
<div style="position:absolute;left:220.50px;top:146.47px;width:84.00px;text-align:center;font-size:12px;line-height:16px;color:#4d4d4d;white-space:nowrap;">A01890</div>
<div style="position:absolute;left:310.70px;top:146.47px;width:83.60px;text-align:left;font-size:12px;line-height:16px;color:#4d4d4d;white-space:nowrap;">ストラップ</div>
<div style="position:absolute;left:400.50px;top:146.47px;width:84.20px;text-align:left;font-size:12px;line-height:16px;color:#4d4d4d;white-space:nowrap;">雑貨</div>
<div style="position:absolute;left:490.30px;top:146.47px;width:51.60px;text-align:right;font-size:12px;line-height:16px;color:#4d4d4d;white-space:nowrap;">90</div>
<div style="position:absolute;left:547.00px;top:146.47px;width:51.90px;text-align:right;font-size:12px;line-height:16px;color:#4d4d4d;white-space:nowrap;">300</div>
<div style="position:absolute;left:603.50px;top:146.47px;width:85.70px;text-align:right;font-size:12px;line-height:16px;color:#4d4d4d;white-space:nowrap;">27,000</div>
<div style="position:absolute;left:693.80px;top:146.47px;width:85.10px;text-align:left;font-size:12px;line-height:16px;color:#4d4d4d;white-space:nowrap;">山根物産</div>
<div style="position:absolute;left:24.10px;top:167.14px;width:62.80px;text-align:right;font-size:12px;line-height:16px;color:#111;white-space:nowrap;font-weight:bold;">4</div>
<div style="position:absolute;left:92.90px;top:167.14px;width:58.20px;text-align:right;font-size:12px;line-height:16px;color:#4d4d4d;white-space:nowrap;">6/3</div>
<div style="position:absolute;left:156.50px;top:167.14px;width:58.00px;text-align:center;font-size:12px;line-height:16px;color:#4d4d4d;white-space:nowrap;">金</div>
<div style="position:absolute;left:220.50px;top:167.14px;width:84.00px;text-align:center;font-size:12px;line-height:16px;color:#4d4d4d;white-space:nowrap;">A01530</div>
<div style="position:absolute;left:310.70px;top:167.14px;width:83.60px;text-align:left;font-size:12px;line-height:16px;color:#4d4d4d;white-space:nowrap;">メモ用紙</div>
<div style="position:absolute;left:400.50px;top:167.14px;width:84.20px;text-align:left;font-size:12px;line-height:16px;color:#4d4d4d;white-space:nowrap;">文具</div>
<div style="position:absolute;left:490.30px;top:167.14px;width:51.60px;text-align:right;font-size:12px;line-height:16px;color:#4d4d4d;white-space:nowrap;">75</div>
<div style="position:absolute;left:547.00px;top:167.14px;width:51.90px;text-align:right;font-size:12px;line-height:16px;color:#4d4d4d;white-space:nowrap;">150</div>
<div style="position:absolute;left:603.50px;top:167.14px;width:85.70px;text-align:right;font-size:12px;line-height:16px;color:#4d4d4d;white-space:nowrap;">11,250</div>
<div style="position:absolute;left:693.80px;top:167.14px;width:85.10px;text-align:left;font-size:12px;line-height:16px;color:#4d4d4d;white-space:nowrap;">川西商店</div>
<div style="position:absolute;left:24.10px;top:187.80px;width:62.80px;text-align:right;font-size:12px;line-height:16px;color:#111;white-space:nowrap;font-weight:bold;">5</div>
<div style="position:absolute;left:92.90px;top:187.80px;width:58.20px;text-align:right;font-size:12px;line-height:16px;color:#4d4d4d;white-space:nowrap;">6/3</div>
<div style="position:absolute;left:156.50px;top:187.80px;width:58.00px;text-align:center;font-size:12px;line-height:16px;color:#4d4d4d;white-space:nowrap;">金</div>
<div style="position:absolute;left:220.50px;top:187.80px;width:84.00px;text-align:center;font-size:12px;line-height:16px;color:#4d4d4d;white-space:nowrap;">A02000</div>
<div style="position:absolute;left:310.70px;top:187.80px;width:83.60px;text-align:left;font-size:12px;line-height:16px;color:#4d4d4d;white-space:nowrap;">ブランケット</div>
<div style="position:absolute;left:400.50px;top:187.80px;width:84.20px;text-align:left;font-size:12px;line-height:16px;color:#4d4d4d;white-space:nowrap;">雑貨</div>
<div style="position:absolute;left:490.30px;top:187.80px;width:51.60px;text-align:right;font-size:12px;line-height:16px;color:#4d4d4d;white-space:nowrap;">500</div>
<div style="position:absolute;left:547.00px;top:187.80px;width:51.90px;text-align:right;font-size:12px;line-height:16px;color:#4d4d4d;white-space:nowrap;">300</div>
<div style="position:absolute;left:603.50px;top:187.80px;width:85.70px;text-align:right;font-size:12px;line-height:16px;color:#4d4d4d;white-space:nowrap;">150,000</div>
<div style="position:absolute;left:693.80px;top:187.80px;width:85.10px;text-align:left;font-size:12px;line-height:16px;color:#4d4d4d;white-space:nowrap;">菊池産業</div>
<div style="position:absolute;left:24.10px;top:208.47px;width:62.80px;text-align:right;font-size:12px;line-height:16px;color:#111;white-space:nowrap;font-weight:bold;">6</div>
<div style="position:absolute;left:92.90px;top:208.47px;width:58.20px;text-align:right;font-size:12px;line-height:16px;color:#4d4d4d;white-space:nowrap;">6/3</div>
<div style="position:absolute;left:156.50px;top:208.47px;width:58.00px;text-align:center;font-size:12px;line-height:16px;color:#4d4d4d;white-space:nowrap;">金</div>
<div style="position:absolute;left:220.50px;top:208.47px;width:84.00px;text-align:center;font-size:12px;line-height:16px;color:#4d4d4d;white-space:nowrap;">A01200</div>
<div style="position:absolute;left:310.70px;top:208.47px;width:83.60px;text-align:left;font-size:12px;line-height:16px;color:#4d4d4d;white-space:nowrap;">コースター</div>
<div style="position:absolute;left:400.50px;top:208.47px;width:84.20px;text-align:left;font-size:12px;line-height:16px;color:#4d4d4d;white-space:nowrap;">キッチン</div>
<div style="position:absolute;left:490.30px;top:208.47px;width:51.60px;text-align:right;font-size:12px;line-height:16px;color:#4d4d4d;white-space:nowrap;">130</div>
<div style="position:absolute;left:547.00px;top:208.47px;width:51.90px;text-align:right;font-size:12px;line-height:16px;color:#4d4d4d;white-space:nowrap;">200</div>
<div style="position:absolute;left:603.50px;top:208.47px;width:85.70px;text-align:right;font-size:12px;line-height:16px;color:#4d4d4d;white-space:nowrap;">26,000</div>
<div style="position:absolute;left:693.80px;top:208.47px;width:85.10px;text-align:left;font-size:12px;line-height:16px;color:#4d4d4d;white-space:nowrap;">山根物産</div>
<div style="position:absolute;left:24.10px;top:229.14px;width:62.80px;text-align:right;font-size:12px;line-height:16px;color:#111;white-space:nowrap;font-weight:bold;">7</div>
<div style="position:absolute;left:92.90px;top:229.14px;width:58.20px;text-align:right;font-size:12px;line-height:16px;color:#4d4d4d;white-space:nowrap;">6/6</div>
<div style="position:absolute;left:156.50px;top:229.14px;width:58.00px;text-align:center;font-size:12px;line-height:16px;color:#4d4d4d;white-space:nowrap;">月</div>
<div style="position:absolute;left:220.50px;top:229.14px;width:84.00px;text-align:center;font-size:12px;line-height:16px;color:#4d4d4d;white-space:nowrap;">A01180</div>
<div style="position:absolute;left:310.70px;top:229.14px;width:83.60px;text-align:left;font-size:12px;line-height:16px;color:#4d4d4d;white-space:nowrap;">タンブラー</div>
<div style="position:absolute;left:400.50px;top:229.14px;width:84.20px;text-align:left;font-size:12px;line-height:16px;color:#4d4d4d;white-space:nowrap;">キッチン</div>
<div style="position:absolute;left:490.30px;top:229.14px;width:51.60px;text-align:right;font-size:12px;line-height:16px;color:#4d4d4d;white-space:nowrap;">200</div>
<div style="position:absolute;left:547.00px;top:229.14px;width:51.90px;text-align:right;font-size:12px;line-height:16px;color:#4d4d4d;white-space:nowrap;">300</div>
<div style="position:absolute;left:603.50px;top:229.14px;width:85.70px;text-align:right;font-size:12px;line-height:16px;color:#4d4d4d;white-space:nowrap;">60,000</div>
<div style="position:absolute;left:693.80px;top:229.14px;width:85.10px;text-align:left;font-size:12px;line-height:16px;color:#4d4d4d;white-space:nowrap;">奈良産業</div>
<div style="position:absolute;left:24.10px;top:249.80px;width:62.80px;text-align:right;font-size:12px;line-height:16px;color:#111;white-space:nowrap;font-weight:bold;">22</div>
<div style="position:absolute;left:92.90px;top:249.80px;width:58.20px;text-align:right;font-size:12px;line-height:16px;color:#4d4d4d;white-space:nowrap;">6/17</div>
<div style="position:absolute;left:156.50px;top:249.80px;width:58.00px;text-align:center;font-size:12px;line-height:16px;color:#4d4d4d;white-space:nowrap;">金</div>
<div style="position:absolute;left:220.50px;top:249.80px;width:84.00px;text-align:center;font-size:12px;line-height:16px;color:#4d4d4d;white-space:nowrap;">A01530</div>
<div style="position:absolute;left:310.70px;top:249.80px;width:83.60px;text-align:left;font-size:12px;line-height:16px;color:#4d4d4d;white-space:nowrap;">メモ用紙</div>
<div style="position:absolute;left:400.50px;top:249.80px;width:84.20px;text-align:left;font-size:12px;line-height:16px;color:#4d4d4d;white-space:nowrap;">文具</div>
<div style="position:absolute;left:490.30px;top:249.80px;width:51.60px;text-align:right;font-size:12px;line-height:16px;color:#4d4d4d;white-space:nowrap;">75</div>
<div style="position:absolute;left:547.00px;top:249.80px;width:51.90px;text-align:right;font-size:12px;line-height:16px;color:#4d4d4d;white-space:nowrap;">100</div>
<div style="position:absolute;left:603.50px;top:249.80px;width:85.70px;text-align:right;font-size:12px;line-height:16px;color:#4d4d4d;white-space:nowrap;">7,500</div>
<div style="position:absolute;left:693.80px;top:249.80px;width:85.10px;text-align:left;font-size:12px;line-height:16px;color:#4d4d4d;white-space:nowrap;">伊藤産業</div>
<div style="position:absolute;left:24.10px;top:270.47px;width:62.80px;text-align:right;font-size:12px;line-height:16px;color:#111;white-space:nowrap;font-weight:bold;">9</div>
<div style="position:absolute;left:92.90px;top:270.47px;width:58.20px;text-align:right;font-size:12px;line-height:16px;color:#4d4d4d;white-space:nowrap;">6/8</div>
<div style="position:absolute;left:156.50px;top:270.47px;width:58.00px;text-align:center;font-size:12px;line-height:16px;color:#4d4d4d;white-space:nowrap;">木</div>
<div style="position:absolute;left:220.50px;top:270.47px;width:84.00px;text-align:center;font-size:12px;line-height:16px;color:#4d4d4d;white-space:nowrap;">A01530</div>
<div style="position:absolute;left:310.70px;top:270.47px;width:83.60px;text-align:left;font-size:12px;line-height:16px;color:#4d4d4d;white-space:nowrap;">メモ用紙</div>
<div style="position:absolute;left:400.50px;top:270.47px;width:84.20px;text-align:left;font-size:12px;line-height:16px;color:#4d4d4d;white-space:nowrap;">文具</div>
<div style="position:absolute;left:490.30px;top:270.47px;width:51.60px;text-align:right;font-size:12px;line-height:16px;color:#4d4d4d;white-space:nowrap;">75</div>
<div style="position:absolute;left:547.00px;top:270.47px;width:51.90px;text-align:right;font-size:12px;line-height:16px;color:#4d4d4d;white-space:nowrap;">200</div>
<div style="position:absolute;left:603.50px;top:270.47px;width:85.70px;text-align:right;font-size:12px;line-height:16px;color:#4d4d4d;white-space:nowrap;">15,000</div>
<div style="position:absolute;left:693.80px;top:270.47px;width:85.10px;text-align:left;font-size:12px;line-height:16px;color:#4d4d4d;white-space:nowrap;">菊池産業</div>
<div style="position:absolute;left:24.10px;top:291.14px;width:62.80px;text-align:right;font-size:12px;line-height:16px;color:#111;white-space:nowrap;font-weight:bold;">10</div>
<div style="position:absolute;left:92.90px;top:291.14px;width:58.20px;text-align:right;font-size:12px;line-height:16px;color:#4d4d4d;white-space:nowrap;">6/8</div>
<div style="position:absolute;left:156.50px;top:291.14px;width:58.00px;text-align:center;font-size:12px;line-height:16px;color:#4d4d4d;white-space:nowrap;">木</div>
<div style="position:absolute;left:220.50px;top:291.14px;width:84.00px;text-align:center;font-size:12px;line-height:16px;color:#4d4d4d;white-space:nowrap;">A01180</div>
<div style="position:absolute;left:310.70px;top:291.14px;width:83.60px;text-align:left;font-size:12px;line-height:16px;color:#4d4d4d;white-space:nowrap;">タンブラー</div>
<div style="position:absolute;left:400.50px;top:291.14px;width:84.20px;text-align:left;font-size:12px;line-height:16px;color:#4d4d4d;white-space:nowrap;">キッチン</div>
<div style="position:absolute;left:490.30px;top:291.14px;width:51.60px;text-align:right;font-size:12px;line-height:16px;color:#4d4d4d;white-space:nowrap;">200</div>
<div style="position:absolute;left:547.00px;top:291.14px;width:51.90px;text-align:right;font-size:12px;line-height:16px;color:#4d4d4d;white-space:nowrap;">600</div>
<div style="position:absolute;left:603.50px;top:291.14px;width:85.70px;text-align:right;font-size:12px;line-height:16px;color:#4d4d4d;white-space:nowrap;">120,000</div>
<div style="position:absolute;left:693.80px;top:291.14px;width:85.10px;text-align:left;font-size:12px;line-height:16px;color:#4d4d4d;white-space:nowrap;">髙石商店</div>
<div style="position:absolute;left:24.10px;top:311.81px;width:62.80px;text-align:right;font-size:12px;line-height:16px;color:#111;white-space:nowrap;font-weight:bold;">11</div>
<div style="position:absolute;left:92.90px;top:311.81px;width:58.20px;text-align:right;font-size:12px;line-height:16px;color:#4d4d4d;white-space:nowrap;">6/8</div>
<div style="position:absolute;left:156.50px;top:311.81px;width:58.00px;text-align:center;font-size:12px;line-height:16px;color:#4d4d4d;white-space:nowrap;">木</div>
<div style="position:absolute;left:220.50px;top:311.81px;width:84.00px;text-align:center;font-size:12px;line-height:16px;color:#4d4d4d;white-space:nowrap;">A01510</div>
<div style="position:absolute;left:310.70px;top:311.81px;width:83.60px;text-align:left;font-size:12px;line-height:16px;color:#4d4d4d;white-space:nowrap;">3色ボールペン</div>
<div style="position:absolute;left:400.50px;top:311.81px;width:84.20px;text-align:left;font-size:12px;line-height:16px;color:#4d4d4d;white-space:nowrap;">文具</div>
<div style="position:absolute;left:490.30px;top:311.81px;width:51.60px;text-align:right;font-size:12px;line-height:16px;color:#4d4d4d;white-space:nowrap;">150</div>
<div style="position:absolute;left:547.00px;top:311.81px;width:51.90px;text-align:right;font-size:12px;line-height:16px;color:#4d4d4d;white-space:nowrap;">500</div>
<div style="position:absolute;left:603.50px;top:311.81px;width:85.70px;text-align:right;font-size:12px;line-height:16px;color:#4d4d4d;white-space:nowrap;">75,000</div>
<div style="position:absolute;left:693.80px;top:311.81px;width:85.10px;text-align:left;font-size:12px;line-height:16px;color:#4d4d4d;white-space:nowrap;">菊池産業</div>
<div style="position:absolute;left:24.10px;top:332.47px;width:62.80px;text-align:right;font-size:12px;line-height:16px;color:#111;white-space:nowrap;font-weight:bold;">12</div>
<div style="position:absolute;left:92.90px;top:332.47px;width:58.20px;text-align:right;font-size:12px;line-height:16px;color:#4d4d4d;white-space:nowrap;">6/9</div>
<div style="position:absolute;left:156.50px;top:332.47px;width:58.00px;text-align:center;font-size:12px;line-height:16px;color:#4d4d4d;white-space:nowrap;">木</div>
<div style="position:absolute;left:220.50px;top:332.47px;width:84.00px;text-align:center;font-size:12px;line-height:16px;color:#4d4d4d;white-space:nowrap;">A01900</div>
<div style="position:absolute;left:310.70px;top:332.47px;width:83.60px;text-align:left;font-size:12px;line-height:16px;color:#4d4d4d;white-space:nowrap;">キーホルダー</div>
<div style="position:absolute;left:400.50px;top:332.47px;width:84.20px;text-align:left;font-size:12px;line-height:16px;color:#4d4d4d;white-space:nowrap;">雑貨</div>
<div style="position:absolute;left:490.30px;top:332.47px;width:51.60px;text-align:right;font-size:12px;line-height:16px;color:#4d4d4d;white-space:nowrap;">50</div>
<div style="position:absolute;left:547.00px;top:332.47px;width:51.90px;text-align:right;font-size:12px;line-height:16px;color:#4d4d4d;white-space:nowrap;">500</div>
<div style="position:absolute;left:603.50px;top:332.47px;width:85.70px;text-align:right;font-size:12px;line-height:16px;color:#4d4d4d;white-space:nowrap;">25,000</div>
<div style="position:absolute;left:693.80px;top:332.47px;width:85.10px;text-align:left;font-size:12px;line-height:16px;color:#4d4d4d;white-space:nowrap;">小西商事</div>
<div style="position:absolute;left:24.10px;top:353.14px;width:62.80px;text-align:right;font-size:12px;line-height:16px;color:#111;white-space:nowrap;font-weight:bold;">13</div>
<div style="position:absolute;left:92.90px;top:353.14px;width:58.20px;text-align:right;font-size:12px;line-height:16px;color:#4d4d4d;white-space:nowrap;">6/9</div>
<div style="position:absolute;left:156.50px;top:353.14px;width:58.00px;text-align:center;font-size:12px;line-height:16px;color:#4d4d4d;white-space:nowrap;">木</div>
<div style="position:absolute;left:220.50px;top:353.14px;width:84.00px;text-align:center;font-size:12px;line-height:16px;color:#4d4d4d;white-space:nowrap;">A01520</div>
<div style="position:absolute;left:310.70px;top:353.14px;width:83.60px;text-align:left;font-size:12px;line-height:16px;color:#4d4d4d;white-space:nowrap;">ステープラー</div>
<div style="position:absolute;left:400.50px;top:353.14px;width:84.20px;text-align:left;font-size:12px;line-height:16px;color:#4d4d4d;white-space:nowrap;">文具</div>
<div style="position:absolute;left:490.30px;top:353.14px;width:51.60px;text-align:right;font-size:12px;line-height:16px;color:#4d4d4d;white-space:nowrap;">140</div>
<div style="position:absolute;left:547.00px;top:353.14px;width:51.90px;text-align:right;font-size:12px;line-height:16px;color:#4d4d4d;white-space:nowrap;">100</div>
<div style="position:absolute;left:603.50px;top:353.14px;width:85.70px;text-align:right;font-size:12px;line-height:16px;color:#4d4d4d;white-space:nowrap;">14,000</div>
<div style="position:absolute;left:693.80px;top:353.14px;width:85.10px;text-align:left;font-size:12px;line-height:16px;color:#4d4d4d;white-space:nowrap;">山根物産</div>
<div style="position:absolute;left:24.10px;top:373.81px;width:62.80px;text-align:right;font-size:12px;line-height:16px;color:#111;white-space:nowrap;font-weight:bold;">14</div>
<div style="position:absolute;left:92.90px;top:373.81px;width:58.20px;text-align:right;font-size:12px;line-height:16px;color:#4d4d4d;white-space:nowrap;">6/13</div>
<div style="position:absolute;left:156.50px;top:373.81px;width:58.00px;text-align:center;font-size:12px;line-height:16px;color:#4d4d4d;white-space:nowrap;">月</div>
<div style="position:absolute;left:220.50px;top:373.81px;width:84.00px;text-align:center;font-size:12px;line-height:16px;color:#4d4d4d;white-space:nowrap;">A01890</div>
<div style="position:absolute;left:310.70px;top:373.81px;width:83.60px;text-align:left;font-size:12px;line-height:16px;color:#4d4d4d;white-space:nowrap;">ストラップ</div>
<div style="position:absolute;left:400.50px;top:373.81px;width:84.20px;text-align:left;font-size:12px;line-height:16px;color:#4d4d4d;white-space:nowrap;">雑貨</div>
<div style="position:absolute;left:490.30px;top:373.81px;width:51.60px;text-align:right;font-size:12px;line-height:16px;color:#4d4d4d;white-space:nowrap;">90</div>
<div style="position:absolute;left:547.00px;top:373.81px;width:51.90px;text-align:right;font-size:12px;line-height:16px;color:#4d4d4d;white-space:nowrap;">300</div>
<div style="position:absolute;left:603.50px;top:373.81px;width:85.70px;text-align:right;font-size:12px;line-height:16px;color:#4d4d4d;white-space:nowrap;">27,000</div>
<div style="position:absolute;left:693.80px;top:373.81px;width:85.10px;text-align:left;font-size:12px;line-height:16px;color:#4d4d4d;white-space:nowrap;">菊池産業</div>
<div style="position:absolute;left:24.10px;top:394.47px;width:62.80px;text-align:right;font-size:12px;line-height:16px;color:#111;white-space:nowrap;font-weight:bold;">15</div>
<div style="position:absolute;left:92.90px;top:394.47px;width:58.20px;text-align:right;font-size:12px;line-height:16px;color:#4d4d4d;white-space:nowrap;">6/13</div>
<div style="position:absolute;left:156.50px;top:394.47px;width:58.00px;text-align:center;font-size:12px;line-height:16px;color:#4d4d4d;white-space:nowrap;">月</div>
<div style="position:absolute;left:220.50px;top:394.47px;width:84.00px;text-align:center;font-size:12px;line-height:16px;color:#4d4d4d;white-space:nowrap;">A01920</div>
<div style="position:absolute;left:310.70px;top:394.47px;width:83.60px;text-align:left;font-size:12px;line-height:16px;color:#4d4d4d;white-space:nowrap;">ミニタオル</div>
<div style="position:absolute;left:400.50px;top:394.47px;width:84.20px;text-align:left;font-size:12px;line-height:16px;color:#4d4d4d;white-space:nowrap;">雑貨</div>
<div style="position:absolute;left:490.30px;top:394.47px;width:51.60px;text-align:right;font-size:12px;line-height:16px;color:#4d4d4d;white-space:nowrap;">80</div>
<div style="position:absolute;left:547.00px;top:394.47px;width:51.90px;text-align:right;font-size:12px;line-height:16px;color:#4d4d4d;white-space:nowrap;">100</div>
<div style="position:absolute;left:603.50px;top:394.47px;width:85.70px;text-align:right;font-size:12px;line-height:16px;color:#4d4d4d;white-space:nowrap;">8,000</div>
<div style="position:absolute;left:693.80px;top:394.47px;width:85.10px;text-align:left;font-size:12px;line-height:16px;color:#4d4d4d;white-space:nowrap;">菊池産業</div>
<div style="position:absolute;left:24.10px;top:415.14px;width:62.80px;text-align:right;font-size:12px;line-height:16px;color:#111;white-space:nowrap;font-weight:bold;">16</div>
<div style="position:absolute;left:92.90px;top:415.14px;width:58.20px;text-align:right;font-size:12px;line-height:16px;color:#4d4d4d;white-space:nowrap;">6/13</div>
<div style="position:absolute;left:156.50px;top:415.14px;width:58.00px;text-align:center;font-size:12px;line-height:16px;color:#4d4d4d;white-space:nowrap;">月</div>
<div style="position:absolute;left:220.50px;top:415.14px;width:84.00px;text-align:center;font-size:12px;line-height:16px;color:#4d4d4d;white-space:nowrap;">A01380</div>
<div style="position:absolute;left:310.70px;top:415.14px;width:83.60px;text-align:left;font-size:12px;line-height:16px;color:#4d4d4d;white-space:nowrap;">エコバッグ</div>
<div style="position:absolute;left:400.50px;top:415.14px;width:84.20px;text-align:left;font-size:12px;line-height:16px;color:#4d4d4d;white-space:nowrap;">バッグ</div>
<div style="position:absolute;left:490.30px;top:415.14px;width:51.60px;text-align:right;font-size:12px;line-height:16px;color:#4d4d4d;white-space:nowrap;">150</div>
<div style="position:absolute;left:547.00px;top:415.14px;width:51.90px;text-align:right;font-size:12px;line-height:16px;color:#4d4d4d;white-space:nowrap;">700</div>
<div style="position:absolute;left:603.50px;top:415.14px;width:85.70px;text-align:right;font-size:12px;line-height:16px;color:#4d4d4d;white-space:nowrap;">105,000</div>
<div style="position:absolute;left:693.80px;top:415.14px;width:85.10px;text-align:left;font-size:12px;line-height:16px;color:#4d4d4d;white-space:nowrap;">川西商店</div>
<div style="position:absolute;left:24.10px;top:435.81px;width:62.80px;text-align:right;font-size:12px;line-height:16px;color:#111;white-space:nowrap;font-weight:bold;">17</div>
<div style="position:absolute;left:92.90px;top:435.81px;width:58.20px;text-align:right;font-size:12px;line-height:16px;color:#4d4d4d;white-space:nowrap;">6/14</div>
<div style="position:absolute;left:156.50px;top:435.81px;width:58.00px;text-align:center;font-size:12px;line-height:16px;color:#4d4d4d;white-space:nowrap;">火</div>
<div style="position:absolute;left:220.50px;top:435.81px;width:84.00px;text-align:center;font-size:12px;line-height:16px;color:#4d4d4d;white-space:nowrap;">A01400</div>
<div style="position:absolute;left:310.70px;top:435.81px;width:83.60px;text-align:left;font-size:12px;line-height:16px;color:#4d4d4d;white-space:nowrap;">ポーチ</div>
<div style="position:absolute;left:400.50px;top:435.81px;width:84.20px;text-align:left;font-size:12px;line-height:16px;color:#4d4d4d;white-space:nowrap;">バッグ</div>
<div style="position:absolute;left:490.30px;top:435.81px;width:51.60px;text-align:right;font-size:12px;line-height:16px;color:#4d4d4d;white-space:nowrap;">350</div>
<div style="position:absolute;left:547.00px;top:435.81px;width:51.90px;text-align:right;font-size:12px;line-height:16px;color:#4d4d4d;white-space:nowrap;">300</div>
<div style="position:absolute;left:603.50px;top:435.81px;width:85.70px;text-align:right;font-size:12px;line-height:16px;color:#4d4d4d;white-space:nowrap;">105,000</div>
<div style="position:absolute;left:693.80px;top:435.81px;width:85.10px;text-align:left;font-size:12px;line-height:16px;color:#4d4d4d;white-space:nowrap;">トマト商事</div>
<div style="position:absolute;left:24.10px;top:456.47px;width:62.80px;text-align:right;font-size:12px;line-height:16px;color:#111;white-space:nowrap;font-weight:bold;">18</div>
<div style="position:absolute;left:92.90px;top:456.47px;width:58.20px;text-align:right;font-size:12px;line-height:16px;color:#4d4d4d;white-space:nowrap;">6/14</div>
<div style="position:absolute;left:156.50px;top:456.47px;width:58.00px;text-align:center;font-size:12px;line-height:16px;color:#4d4d4d;white-space:nowrap;">火</div>
<div style="position:absolute;left:220.50px;top:456.47px;width:84.00px;text-align:center;font-size:12px;line-height:16px;color:#4d4d4d;white-space:nowrap;">A01200</div>
<div style="position:absolute;left:310.70px;top:456.47px;width:83.60px;text-align:left;font-size:12px;line-height:16px;color:#4d4d4d;white-space:nowrap;">コースター</div>
<div style="position:absolute;left:400.50px;top:456.47px;width:84.20px;text-align:left;font-size:12px;line-height:16px;color:#4d4d4d;white-space:nowrap;">キッチン</div>
<div style="position:absolute;left:490.30px;top:456.47px;width:51.60px;text-align:right;font-size:12px;line-height:16px;color:#4d4d4d;white-space:nowrap;">130</div>
<div style="position:absolute;left:547.00px;top:456.47px;width:51.90px;text-align:right;font-size:12px;line-height:16px;color:#4d4d4d;white-space:nowrap;">250</div>
<div style="position:absolute;left:603.50px;top:456.47px;width:85.70px;text-align:right;font-size:12px;line-height:16px;color:#4d4d4d;white-space:nowrap;">32,500</div>
<div style="position:absolute;left:693.80px;top:456.47px;width:85.10px;text-align:left;font-size:12px;line-height:16px;color:#4d4d4d;white-space:nowrap;">トマト商事</div>
<div style="position:absolute;left:24.10px;top:477.14px;width:62.80px;text-align:right;font-size:12px;line-height:16px;color:#111;white-space:nowrap;font-weight:bold;">23</div>
<div style="position:absolute;left:92.90px;top:477.14px;width:58.20px;text-align:right;font-size:12px;line-height:16px;color:#4d4d4d;white-space:nowrap;">6/17</div>
<div style="position:absolute;left:156.50px;top:477.14px;width:58.00px;text-align:center;font-size:12px;line-height:16px;color:#4d4d4d;white-space:nowrap;">金</div>
<div style="position:absolute;left:220.50px;top:477.14px;width:84.00px;text-align:center;font-size:12px;line-height:16px;color:#4d4d4d;white-space:nowrap;">A01920</div>
<div style="position:absolute;left:310.70px;top:477.14px;width:83.60px;text-align:left;font-size:12px;line-height:16px;color:#4d4d4d;white-space:nowrap;">ミニタオル</div>
<div style="position:absolute;left:400.50px;top:477.14px;width:84.20px;text-align:left;font-size:12px;line-height:16px;color:#4d4d4d;white-space:nowrap;">雑貨</div>
<div style="position:absolute;left:490.30px;top:477.14px;width:51.60px;text-align:right;font-size:12px;line-height:16px;color:#4d4d4d;white-space:nowrap;">80</div>
<div style="position:absolute;left:547.00px;top:477.14px;width:51.90px;text-align:right;font-size:12px;line-height:16px;color:#4d4d4d;white-space:nowrap;">100</div>
<div style="position:absolute;left:603.50px;top:477.14px;width:85.70px;text-align:right;font-size:12px;line-height:16px;color:#4d4d4d;white-space:nowrap;">8,000</div>
<div style="position:absolute;left:693.80px;top:477.14px;width:85.10px;text-align:left;font-size:12px;line-height:16px;color:#4d4d4d;white-space:nowrap;">トマト商事</div>
<div style="position:absolute;left:24.10px;top:497.81px;width:62.80px;text-align:right;font-size:12px;line-height:16px;color:#111;white-space:nowrap;font-weight:bold;">20</div>
<div style="position:absolute;left:92.90px;top:497.81px;width:58.20px;text-align:right;font-size:12px;line-height:16px;color:#4d4d4d;white-space:nowrap;">6/15</div>
<div style="position:absolute;left:156.50px;top:497.81px;width:58.00px;text-align:center;font-size:12px;line-height:16px;color:#4d4d4d;white-space:nowrap;">水</div>
<div style="position:absolute;left:220.50px;top:497.81px;width:84.00px;text-align:center;font-size:12px;line-height:16px;color:#4d4d4d;white-space:nowrap;">A01380</div>
<div style="position:absolute;left:310.70px;top:497.81px;width:83.60px;text-align:left;font-size:12px;line-height:16px;color:#4d4d4d;white-space:nowrap;">エコバッグ</div>
<div style="position:absolute;left:400.50px;top:497.81px;width:84.20px;text-align:left;font-size:12px;line-height:16px;color:#4d4d4d;white-space:nowrap;">バッグ</div>
<div style="position:absolute;left:490.30px;top:497.81px;width:51.60px;text-align:right;font-size:12px;line-height:16px;color:#4d4d4d;white-space:nowrap;">150</div>
<div style="position:absolute;left:547.00px;top:497.81px;width:51.90px;text-align:right;font-size:12px;line-height:16px;color:#4d4d4d;white-space:nowrap;">300</div>
<div style="position:absolute;left:603.50px;top:497.81px;width:85.70px;text-align:right;font-size:12px;line-height:16px;color:#4d4d4d;white-space:nowrap;">45,000</div>
<div style="position:absolute;left:693.80px;top:497.81px;width:85.10px;text-align:left;font-size:12px;line-height:16px;color:#4d4d4d;white-space:nowrap;">菊池産業</div>
<div style="position:absolute;left:24.10px;top:518.48px;width:62.80px;text-align:right;font-size:12px;line-height:16px;color:#111;white-space:nowrap;font-weight:bold;">21</div>
<div style="position:absolute;left:92.90px;top:518.48px;width:58.20px;text-align:right;font-size:12px;line-height:16px;color:#4d4d4d;white-space:nowrap;">6/16</div>
<div style="position:absolute;left:156.50px;top:518.48px;width:58.00px;text-align:center;font-size:12px;line-height:16px;color:#4d4d4d;white-space:nowrap;">木</div>
<div style="position:absolute;left:220.50px;top:518.48px;width:84.00px;text-align:center;font-size:12px;line-height:16px;color:#4d4d4d;white-space:nowrap;">A01920</div>
<div style="position:absolute;left:310.70px;top:518.48px;width:83.60px;text-align:left;font-size:12px;line-height:16px;color:#4d4d4d;white-space:nowrap;">ミニタオル</div>
<div style="position:absolute;left:400.50px;top:518.48px;width:84.20px;text-align:left;font-size:12px;line-height:16px;color:#4d4d4d;white-space:nowrap;">雑貨</div>
<div style="position:absolute;left:490.30px;top:518.48px;width:51.60px;text-align:right;font-size:12px;line-height:16px;color:#4d4d4d;white-space:nowrap;">80</div>
<div style="position:absolute;left:547.00px;top:518.48px;width:51.90px;text-align:right;font-size:12px;line-height:16px;color:#4d4d4d;white-space:nowrap;">400</div>
<div style="position:absolute;left:603.50px;top:518.48px;width:85.70px;text-align:right;font-size:12px;line-height:16px;color:#4d4d4d;white-space:nowrap;">32,000</div>
<div style="position:absolute;left:693.80px;top:518.48px;width:85.10px;text-align:left;font-size:12px;line-height:16px;color:#4d4d4d;white-space:nowrap;">トマト商事</div>
<div style="position:absolute;left:22.80px;top:42.63px;font-size:13px;line-height:16px;color:#1a1a1a;font-weight:bold;white-space:nowrap;padding:0 1px 0 1px">Ｄ地区6月売上明細表</div>
<div style="position:absolute;left:22.8px;top:56.6px;width:126.6px;height:2px;background:#5a5a5a"></div>
<div style="position:absolute;left:601.4px;top:19.47px;width:180.0px;height:20.67px;background:#ffc000"></div>
<div style="position:absolute;left:600.4px;top:19.4px;width:182.1px;height:42.9px;border:2px solid #111"></div>
<div style="position:absolute;left:601.4px;top:39.63px;width:180.0px;height:1px;background:#111"></div>
<div style="position:absolute;left:690.8px;top:19.47px;width:1px;height:41.33px;background:#111"></div>
<div style="position:absolute;left:601.40px;top:22.47px;width:89.90px;text-align:center;font-size:12px;line-height:16px;color:#1a1a1a;font-weight:bold;white-space:nowrap">得意先名</div>
<div style="position:absolute;left:691.30px;top:22.47px;width:90.10px;text-align:center;font-size:12px;line-height:16px;color:#1a1a1a;font-weight:bold;white-space:nowrap">受注件数</div>
<div style="position:absolute;left:604.40px;top:43.13px;width:83.90px;text-align:left;font-size:12px;line-height:16px;color:#4d4d4d;white-space:nowrap;">菊池産業</div>
<div style="position:absolute;left:694.30px;top:43.13px;width:84.10px;text-align:right;font-size:12px;line-height:16px;color:#4d4d4d;white-space:nowrap;">7</div>
</div>
<div style="position:absolute;left:22.2px;top:165.2px;width:23.8px;height:22.7px;border:2px solid #c22a2e;box-shadow:inset 0 0 0 1px #d77a7c"></div>
<div style="position:absolute;left:43.8px;top:184.3px;width:4px;height:4px;background:#7a2a20"></div>
<div style="position:absolute;left:1005.3px;top:146px;width:17.5px;height:551px;background:#eeeeee"></div>
<svg style="position:absolute;left:1010px;top:150px" width="9" height="6" viewBox="0 0 9 6"><path d="M4.5 0.5L8.5 5.5H0.5Z" fill="#666"/></svg>
<svg style="position:absolute;left:1010px;top:689px" width="9" height="6" viewBox="0 0 9 6"><path d="M4.5 5.5L8.5 0.5H0.5Z" fill="#666"/></svg>
<div style="position:absolute;left:1010.7px;top:159.5px;width:7.4px;height:364.5px;background:#6b6b6b;border-radius:4px"></div>
<div style="position:absolute;left:1px;top:697px;width:1022px;height:26px;background:#e9ecef"></div>
<svg style="position:absolute;left:24px;top:705.5px" width="7" height="9" viewBox="0 0 7 9"><path d="M5.5 0.8L1.5 4.5l4 3.7" fill="none" stroke="#a8a8a8" stroke-width="1.2"/></svg>
<svg style="position:absolute;left:50.5px;top:705.5px" width="7" height="9" viewBox="0 0 7 9"><path d="M1.5 0.8L5.5 4.5l-4 3.7" fill="none" stroke="#a8a8a8" stroke-width="1.2"/></svg>
<div style="position:absolute;left:103.5px;top:703.5px;font-size:11.2px;line-height:11.2px;color:#333;font-weight:normal;white-space:nowrap;-webkit-text-stroke:0.2px #333;"><span style="display:inline-block;transform:scaleX(0.800);transform-origin:0 0;margin-right:-0.800em">ピボット</span></div>
<div style="position:absolute;left:148px;top:703px;width:1px;height:15px;background:#cfcfcf"></div>
<div style="position:absolute;left:160px;top:703.5px;font-size:11.4px;line-height:11.4px;color:#333;font-weight:normal;white-space:nowrap;letter-spacing:0.5px;-webkit-text-stroke:0.2px #333;">売上一覧表</div>
<div style="position:absolute;left:226.6px;top:703px;width:1px;height:15px;background:#cfcfcf"></div>
<div style="position:absolute;left:230px;top:697px;width:91px;height:23px;background:#fff;border-radius:0 0 5px 5px;box-shadow:0 1px 1px rgba(0,0,0,0.06)"></div>
<div style="position:absolute;left:237.3px;top:702.8px;font-size:11.5px;line-height:11.5px;color:#222;font-weight:normal;white-space:nowrap;-webkit-text-stroke:0.2px #222;">6月売上明細表</div>
<div style="position:absolute;left:237.2px;top:714.8px;width:76.6px;height:2.2px;background:#2a6e55;border-radius:1px"></div>
<div style="position:absolute;left:324.4px;top:703px;width:1px;height:15px;background:#cfcfcf"></div>
<div style="position:absolute;left:336px;top:703.5px;font-size:11.4px;line-height:11.4px;color:#333;font-weight:normal;white-space:nowrap;letter-spacing:0.6px;-webkit-text-stroke:0.2px #333;">4~6月集計</div>
<div style="position:absolute;left:404.8px;top:703px;width:1px;height:15px;background:#cfcfcf"></div>
<div style="position:absolute;left:415.8px;top:703.5px;font-size:11.4px;line-height:11.4px;color:#333;font-weight:normal;white-space:nowrap;letter-spacing:1.5px;-webkit-text-stroke:0.2px #333;">集計</div>
<div style="position:absolute;left:448.4px;top:703px;width:1px;height:15px;background:#cfcfcf"></div>
<svg style="position:absolute;left:483.5px;top:705.5px" width="10" height="10" viewBox="0 0 10 10"><path d="M5 0.5v9M0.5 5h9" fill="none" stroke="#444" stroke-width="1.1"/></svg>
<div style="position:absolute;left:615.2px;top:706.2px;width:2px;height:2px;background:#444;border-radius:1px"></div>
<div style="position:absolute;left:615.2px;top:709.4px;width:2px;height:2px;background:#444;border-radius:1px"></div>
<div style="position:absolute;left:615.2px;top:712.6px;width:2px;height:2px;background:#444;border-radius:1px"></div>
<div style="position:absolute;left:630px;top:700px;width:377px;height:19px;background:#eceef1;border-radius:3px"></div>
<svg style="position:absolute;left:634.3px;top:706px" width="6" height="7" viewBox="0 0 6 7"><path d="M0 3.5L5.5 0V7Z" fill="#666"/></svg>
<svg style="position:absolute;left:997.2px;top:706px" width="6" height="7" viewBox="0 0 6 7"><path d="M6 3.5L0.5 0V7Z" fill="#666"/></svg>
<div style="position:absolute;left:644.4px;top:705.6px;width:323.6px;height:7.2px;background:#6b6b6b;border-radius:4px"></div>
<div style="position:absolute;left:1px;top:722.6px;width:1022px;height:1px;background:#d3d3d3"></div>
<div style="position:absolute;left:1px;top:723.6px;width:1022px;height:17.5px;background:#f4f3f2"></div>
<div style="position:absolute;left:11.2px;top:726.8px;font-size:10px;line-height:10px;color:#262626;font-weight:normal;white-space:nowrap;-webkit-text-stroke:0.35px #262626;">準備完了</div>
<div style="position:absolute;left:66.9px;top:727.5px;width:10px;height:9px;border:1px solid #777;border-radius:1px"></div>
<svg style="position:absolute;left:88px;top:722px" width="18" height="18" viewBox="0 0 18 18"><circle cx="9.5" cy="5.6" r="1.7" fill="none" stroke="#3a3a3a" stroke-width="1.1"/><path d="M4.6 6.9C6.5 7.3 7.6 7.2 9.5 7.4C11.4 7.2 12.6 7.3 14.4 6.9M8 7.8L6.8 13.6C6.5 15.4 7.8 15.6 8.3 14.3L9.6 10.8" fill="none" stroke="#3a3a3a" stroke-width="1.15" stroke-linecap="round"/><path d="M11.3 7.8L11.6 9.6M10.5 10.8L15.2 15.4M15.2 10.6L10.6 15.4" fill="none" stroke="#3a3a3a" stroke-width="1.15" stroke-linecap="round"/></svg>
<div style="position:absolute;left:106.5px;top:726.8px;font-size:10px;line-height:10px;color:#2a2a2a;font-weight:bold;white-space:nowrap;-webkit-text-stroke:0.3px #2a2a2a;"><span style="display:inline-block;transform:scaleX(0.800);transform-origin:0 0;margin-right:-1.600em">アクセシビリティ</span>: 検討<span style="display:inline-block;transform:scaleX(0.800);transform-origin:0 0;margin-right:-0.200em">が</span>必要<span style="display:inline-block;transform:scaleX(0.800);transform-origin:0 0;margin-right:-0.400em">です</span></div>
<div style="position:absolute;left:762.7px;top:723.6px;width:31.7px;height:17.2px;background:#e1e1e1"></div>
<svg style="position:absolute;left:772px;top:726px" width="11" height="11" viewBox="0 0 11 11"><path d="M0.5 0.5h10v10h-10zM0.5 3.8h10M0.5 7.2h10M3.8 0.5v10M7.2 0.5v10" fill="none" stroke="#444" stroke-width="1"/></svg>
<svg style="position:absolute;left:805px;top:726px" width="12" height="11" viewBox="0 0 12 11"><path d="M0.5 0.5h11v10h-11zM3 3h6v5H3z" fill="none" stroke="#444" stroke-width="1"/></svg>
<svg style="position:absolute;left:838px;top:726px" width="12" height="11" viewBox="0 0 12 11"><path d="M0.5 0.5h11v10h-11zM4 0.5v4h4v-4M0.5 7h11" fill="none" stroke="#444" stroke-width="1"/></svg>
<div style="position:absolute;left:866px;top:731.5px;width:6px;height:1px;background:#444"></div>
<div style="position:absolute;left:876.6px;top:731.6px;width:82px;height:1px;background:#8a8a8a"></div>
<div style="position:absolute;left:915.7px;top:727.2px;width:4.3px;height:9.8px;background:#555"></div>
<svg style="position:absolute;left:962px;top:727px" width="8" height="9" viewBox="0 0 8 9"><path d="M4 0.5v8M0 4.5h8" fill="none" stroke="#444" stroke-width="1"/></svg>
<div style="position:absolute;left:980.8px;top:726.5px;font-size:10.6px;line-height:10.6px;color:#555;font-weight:normal;white-space:nowrap;">100%</div>
<div style="position:absolute;left:0px;top:0px;width:1px;height:742px;background:#4a8a6c"></div>
<div style="position:absolute;left:1022.8px;top:0px;width:1.2px;height:742px;background:#4a8a6c"></div>
<div style="position:absolute;left:0px;top:740.8px;width:1024px;height:1.2px;background:#4a8a6c"></div>
</body></html>
